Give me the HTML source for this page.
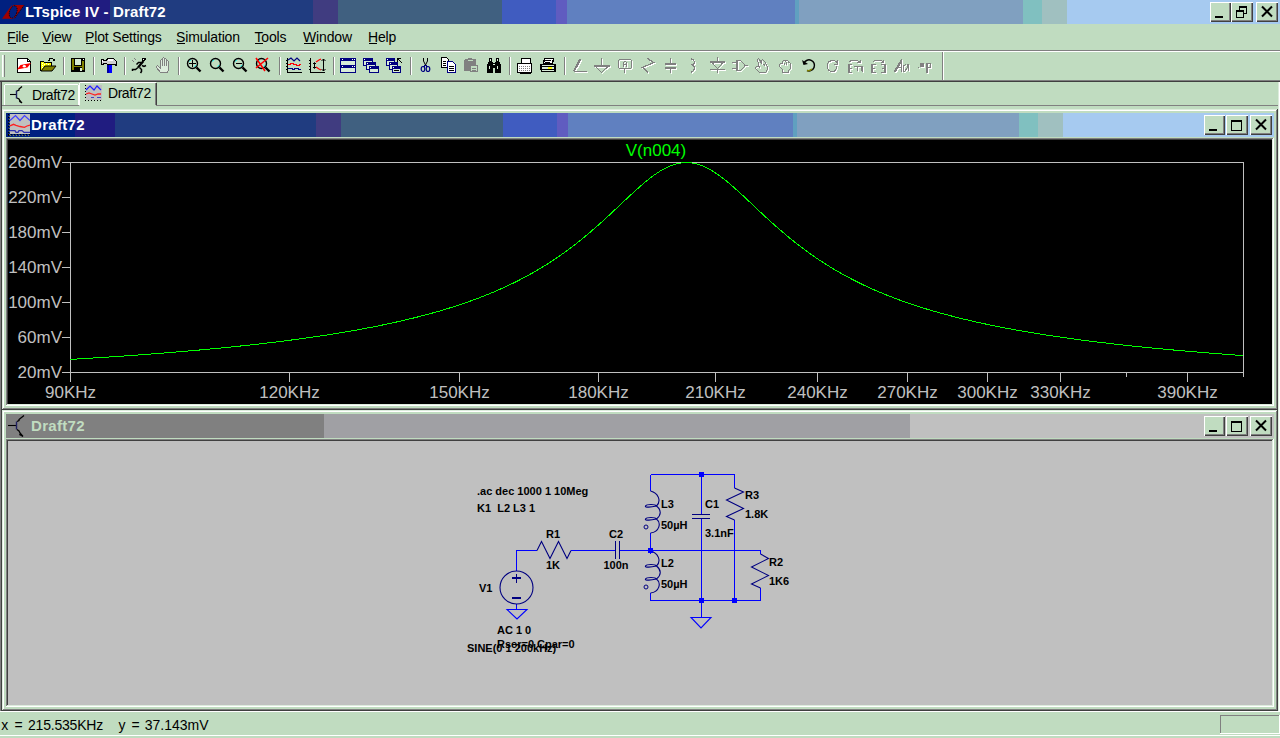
<!DOCTYPE html><html><head><meta charset="utf-8"><style>
html,body{margin:0;padding:0;}body{width:1280px;height:738px;overflow:hidden;position:relative;background:#c0dcc0;font-family:"Liberation Sans",sans-serif;}
.t{position:absolute;white-space:nowrap;line-height:1;}
</style></head><body>
<div style="position:absolute;left:0px;top:0px;width:1280px;height:24px;background:linear-gradient(to right,#002080 0.0px,#002080 70.0px,#201c80 70.0px,#201c80 110.0px,#203c80 110.0px,#203c80 313.0px,#403c80 313.0px,#403c80 338.0px,#406080 338.0px,#406080 502.0px,#405cc0 502.0px,#405cc0 556.0px,#605cc0 556.0px,#605cc0 567.0px,#6080c0 567.0px,#6080c0 795.0px,#60a0c0 795.0px,#60a0c0 799.0px,#80a0c0 799.0px,#80a0c0 1023.0px,#80c0c0 1023.0px,#80c0c0 1042.0px,#a0c0c0 1042.0px,#a0c0c0 1067.0px,#a6caf0 1067.0px,#a6caf0 1280.0px);"></div>
<svg style="position:absolute;left:0px;top:0px" width="28" height="24" viewBox="0 0 28 24"><polygon points="2,18.7 11.8,5 24.2,5 14.2,18.7" fill="#a00000"/><ellipse cx="13.2" cy="11.9" rx="3.6" ry="6.3" transform="rotate(18 13.2 11.9)" fill="#002080" stroke="#000" stroke-width="0.8" stroke-dasharray="1 1"/><path d="M12.6 4.5L11.8 6.5M14 17.5L13 19.5" stroke="#002080" stroke-width="1.2"/><path d="M24 5.5L14.5 18.5" stroke="#000" stroke-width="0.8" stroke-dasharray="1 1"/></svg>
<div class="t" style="left:25px;top:4px;font-size:15px;letter-spacing:0.15px;font-weight:bold;color:#fff;">LTspice IV - Draft72</div>
<div style="position:absolute;left:1210px;top:2px;width:21px;height:20px;background:#c0dcc0;box-shadow:inset 1px 1px 0 #fff, inset -1px -1px 0 #404040, inset -2px -2px 0 #808080;"><div style="position:absolute;left:5px;top:14px;width:8px;height:2px;background:#000"></div></div>
<div style="position:absolute;left:1231px;top:2px;width:22px;height:20px;background:#c0dcc0;box-shadow:inset 1px 1px 0 #fff, inset -1px -1px 0 #404040, inset -2px -2px 0 #808080;"><div style="position:absolute;left:8px;top:4px;width:6px;height:5px;border:1px solid #000;border-top-width:2px;"></div><div style="position:absolute;left:5px;top:8px;width:6px;height:5px;border:1px solid #000;border-top-width:2px;background:#c0dcc0"></div></div>
<div style="position:absolute;left:1256px;top:2px;width:22px;height:20px;background:#c0dcc0;box-shadow:inset 1px 1px 0 #fff, inset -1px -1px 0 #404040, inset -2px -2px 0 #808080;"><svg style="position:absolute;left:0;top:0" width="22" height="20"><path d="M6.0 4.5L16.0 14.5M16.0 4.5L6.0 14.5" stroke="#000" stroke-width="2"/></svg></div>
<div class="t" style="left:7px;top:30px;font-size:14px;letter-spacing:-0.15px;color:#000;">File</div>
<div style="position:absolute;left:7.5px;top:43px;width:8px;height:1px;background:#000;"></div>
<div class="t" style="left:42px;top:30px;font-size:14px;letter-spacing:-0.15px;color:#000;">View</div>
<div style="position:absolute;left:42.5px;top:43px;width:8px;height:1px;background:#000;"></div>
<div class="t" style="left:85px;top:30px;font-size:14px;letter-spacing:-0.15px;color:#000;">Plot Settings</div>
<div style="position:absolute;left:85.5px;top:43px;width:8px;height:1px;background:#000;"></div>
<div class="t" style="left:176px;top:30px;font-size:14px;letter-spacing:-0.15px;color:#000;">Simulation</div>
<div style="position:absolute;left:176.5px;top:43px;width:8px;height:1px;background:#000;"></div>
<div class="t" style="left:254.5px;top:30px;font-size:14px;letter-spacing:-0.15px;color:#000;">Tools</div>
<div style="position:absolute;left:255.0px;top:43px;width:8px;height:1px;background:#000;"></div>
<div class="t" style="left:303px;top:30px;font-size:14px;letter-spacing:-0.15px;color:#000;">Window</div>
<div style="position:absolute;left:303.5px;top:43px;width:11px;height:1px;background:#000;"></div>
<div class="t" style="left:368px;top:30px;font-size:14px;letter-spacing:-0.15px;color:#000;">Help</div>
<div style="position:absolute;left:368.5px;top:43px;width:8px;height:1px;background:#000;"></div>
<div style="position:absolute;left:0px;top:50px;width:1280px;height:1px;background:#808080;"></div>
<div style="position:absolute;left:0px;top:51px;width:1280px;height:1px;background:#fff;"></div>
<div style="position:absolute;left:2px;top:55px;width:1px;height:22px;background:#fff;"></div><div style="position:absolute;left:3px;top:55px;width:1px;height:22px;background:#dcecdc;"></div><div style="position:absolute;left:4px;top:55px;width:1px;height:22px;background:#808080;"></div><div style="position:absolute;left:63px;top:57px;width:1px;height:18px;background:#808080;"></div><div style="position:absolute;left:64px;top:57px;width:1px;height:18px;background:#fff;"></div><div style="position:absolute;left:93px;top:57px;width:1px;height:18px;background:#808080;"></div><div style="position:absolute;left:94px;top:57px;width:1px;height:18px;background:#fff;"></div><div style="position:absolute;left:124px;top:57px;width:1px;height:18px;background:#808080;"></div><div style="position:absolute;left:125px;top:57px;width:1px;height:18px;background:#fff;"></div><div style="position:absolute;left:178px;top:57px;width:1px;height:18px;background:#808080;"></div><div style="position:absolute;left:179px;top:57px;width:1px;height:18px;background:#fff;"></div><div style="position:absolute;left:279px;top:57px;width:1px;height:18px;background:#808080;"></div><div style="position:absolute;left:280px;top:57px;width:1px;height:18px;background:#fff;"></div><div style="position:absolute;left:333px;top:57px;width:1px;height:18px;background:#808080;"></div><div style="position:absolute;left:334px;top:57px;width:1px;height:18px;background:#fff;"></div><div style="position:absolute;left:410px;top:57px;width:1px;height:18px;background:#808080;"></div><div style="position:absolute;left:411px;top:57px;width:1px;height:18px;background:#fff;"></div><div style="position:absolute;left:509px;top:57px;width:1px;height:18px;background:#808080;"></div><div style="position:absolute;left:510px;top:57px;width:1px;height:18px;background:#fff;"></div><div style="position:absolute;left:564px;top:57px;width:1px;height:18px;background:#808080;"></div><div style="position:absolute;left:565px;top:57px;width:1px;height:18px;background:#fff;"></div><div style="position:absolute;left:942px;top:52px;width:1px;height:28px;background:#808080;"></div><div style="position:absolute;left:943px;top:52px;width:1px;height:28px;background:#fff;"></div><svg style="position:absolute;left:16px;top:57px" width="18" height="18" viewBox="0 0 18 18" shape-rendering="crispEdges"><path d="M1.5 1.5H11.5L14.5 4.5V15.5H1.5Z" fill="#fff" stroke="#000" stroke-width="1"/><path d="M11.5 1.5V4.5H14.5" stroke="#000" fill="none"/><polygon points="1,12.5 4.5,8 15,6 11.5,10.5" fill="#ff0000" shape-rendering="auto"/><ellipse cx="8.3" cy="9.2" rx="1.6" ry="1.2" fill="#fff" shape-rendering="auto"/></svg><svg style="position:absolute;left:40px;top:57px" width="18" height="18" viewBox="0 0 18 18" shape-rendering="crispEdges"><path d="M0.5 13.5V4.5H3.5L4.5 5.5H11.5V8.5" fill="#ffff00" stroke="#000"/><path d="M2 6H3M4 7H5M6 6H7M8 7H9M2 8H3M2 10H3M4 9H5" stroke="#fff"/><polygon points="1,14 5,9 16,9 12,14" fill="#808000" stroke="#000" shape-rendering="auto"/><path d="M8.5 4.5L10 1.5H12.5L14 3" stroke="#000" fill="none"/><polygon points="12,4 15,4 15,1" fill="#000"/></svg><svg style="position:absolute;left:70px;top:57px" width="18" height="18" viewBox="0 0 18 18" shape-rendering="crispEdges"><rect x="1" y="1" width="14" height="14" fill="#000"/><rect x="2" y="2" width="2" height="11" fill="#808000"/><rect x="12" y="4" width="2" height="9" fill="#808000"/><rect x="4" y="9" width="8" height="1" fill="#808000"/><rect x="5" y="2" width="6" height="6" fill="#d8ecd8"/><rect x="10" y="11" width="2" height="3" fill="#d8ecd8"/><rect x="13" y="2" width="1" height="1" fill="#fff"/></svg><svg style="position:absolute;left:100px;top:57px" width="18" height="18" viewBox="0 0 18 18" shape-rendering="crispEdges"><path d="M1.5 2.5H3.5V3.5H6.5L7.5 1.5H13.5L16.5 4.5V8.5L14.5 7.5H7.5L6.5 6.5H3.5V7.5H1.5Z" fill="#d0d0d0" stroke="#000"/><rect x="8" y="2" width="5" height="2" fill="#fff"/><rect x="2" y="3" width="1" height="2" fill="#fff"/><rect x="7" y="8" width="5" height="8" fill="#0000ff"/><rect x="7" y="8" width="2" height="8" fill="#0000a0"/></svg><svg style="position:absolute;left:131px;top:57px" width="18" height="18" viewBox="0 0 18 18" shape-rendering="crispEdges"><path d="M11 1H15V2L13 4H11Z" fill="#000"/><rect x="12" y="2" width="1" height="1" fill="#fff"/><path d="M12.5 4L7 10.5" stroke="#000" stroke-width="2.2" shape-rendering="auto"/><path d="M7 10.5L4.5 12.5H1.5V14M8.5 10.5L10.5 12.5V14.5L9.5 16M10 5.5H7.5L5.5 7.5M11 8.5L13 9.5L15 8.5" stroke="#000" stroke-width="1.5" fill="none" shape-rendering="auto"/><path d="M1 3.5L3 4.5M3 1.5L5 2.5" stroke="#808080" fill="none"/></svg><svg style="position:absolute;left:155px;top:57px" width="18" height="18" viewBox="0 0 18 18" shape-rendering="crispEdges"><path d="M5.5 15.5L1.5 10.5V9.5L2.5 8.5L5.5 11.5V3.5L6.5 2.5L7.5 3.5V1.5L8.5 0.5L9.5 1.5V2.5L10.5 1.5L11.5 2.5V4.5L12.5 3.5L13.5 4.5V12.5L12.5 15.5Z" fill="#dcecdc" stroke="#808080"/><path d="M7.5 3V9M9.5 2V9M11.5 3V9" stroke="#808080"/></svg><svg style="position:absolute;left:186px;top:57px" width="18" height="18" viewBox="0 0 18 18" shape-rendering="crispEdges"><circle cx="6.5" cy="6.5" r="5" fill="#c0dcc0" stroke="#000" stroke-width="1.4" shape-rendering="auto"/><path d="M3.5 4.5A3 3 0 0 1 5 3M8.5 9.5A3 3 0 0 0 10 8" stroke="#00ffff" fill="none" shape-rendering="auto"/><path d="M10.5 10.5L14.5 14.5" stroke="#000" stroke-width="2.4" shape-rendering="auto"/><path d="M3 6.5H10M6.5 3V10" stroke="#000" stroke-width="1.2"/></svg><svg style="position:absolute;left:209px;top:57px" width="18" height="18" viewBox="0 0 18 18" shape-rendering="crispEdges"><circle cx="6.5" cy="6.5" r="5" fill="#c0dcc0" stroke="#000" stroke-width="1.4" shape-rendering="auto"/><path d="M3.5 4.5A3 3 0 0 1 5 3M8.5 9.5A3 3 0 0 0 10 8" stroke="#00ffff" fill="none" shape-rendering="auto"/><path d="M10.5 10.5L14.5 14.5" stroke="#000" stroke-width="2.4" shape-rendering="auto"/></svg><svg style="position:absolute;left:232px;top:57px" width="18" height="18" viewBox="0 0 18 18" shape-rendering="crispEdges"><circle cx="6.5" cy="6.5" r="5" fill="#c0dcc0" stroke="#000" stroke-width="1.4" shape-rendering="auto"/><path d="M3.5 4.5A3 3 0 0 1 5 3M8.5 9.5A3 3 0 0 0 10 8" stroke="#00ffff" fill="none" shape-rendering="auto"/><path d="M10.5 10.5L14.5 14.5" stroke="#000" stroke-width="2.4" shape-rendering="auto"/><path d="M3.5 6.5H9.5" stroke="#000" stroke-width="1.2"/></svg><svg style="position:absolute;left:255px;top:57px" width="18" height="18" viewBox="0 0 18 18" shape-rendering="crispEdges"><circle cx="6.5" cy="6.5" r="5" fill="#c0dcc0" stroke="#000" stroke-width="1.4" shape-rendering="auto"/><path d="M3.5 4.5A3 3 0 0 1 5 3M8.5 9.5A3 3 0 0 0 10 8" stroke="#00ffff" fill="none" shape-rendering="auto"/><path d="M10.5 10.5L14.5 14.5" stroke="#000" stroke-width="2.4" shape-rendering="auto"/><path d="M1 1L10 14M13 1L1 11" stroke="#ff0000" stroke-width="1.6" shape-rendering="auto"/></svg><svg style="position:absolute;left:286px;top:57px" width="18" height="18" viewBox="0 0 18 18" shape-rendering="crispEdges"><path d="M1.5 1V15.5H16" stroke="#000" fill="none"/><path d="M0 3.5H1M0 6.5H1M0 9.5H1M0 12.5H1M4.5 15V16M7.5 15V16M10.5 15V16M13.5 15V16" stroke="#000"/><path d="M2 3L5 1L8 4L11 1L14 4" stroke="#000080" fill="none" stroke-width="1.2" shape-rendering="auto"/><path d="M2 7.5H4L5 6.5H7L8 7.5H10L11 8.5H13L14 7.5H15" stroke="#ff0000" stroke-width="1.2" fill="none"/><path d="M2 11.5H6L7 12.5H8L9 11.5H12L13 12.5H15" stroke="#000080" stroke-width="1.4" fill="none"/></svg><svg style="position:absolute;left:309px;top:57px" width="18" height="18" viewBox="0 0 18 18" shape-rendering="crispEdges"><path d="M1.5 1V15.5H16" stroke="#000" fill="none"/><path d="M0 3.5H1M0 6.5H1M0 9.5H1M0 12.5H1M4.5 15V16M7.5 15V16M10.5 15V16M13.5 15V16" stroke="#000"/><path d="M7 5L10 3L12 2M7 10L10 12L12 13" stroke="#ff0000" stroke-width="1.3" fill="none" shape-rendering="auto"/><path d="M14.5 2V14M12.5 4L14.5 2L16.5 4M12.5 12L14.5 14L16.5 12M5.5 6V11M4 7L5.5 5.5L7 7M4 10L5.5 11.5L7 10" stroke="#000" fill="none" shape-rendering="auto"/></svg><svg style="position:absolute;left:340px;top:57px" width="18" height="18" viewBox="0 0 18 18" shape-rendering="crispEdges"><rect x="0" y="1" width="16" height="15" fill="#000080"/><rect x="1" y="4" width="14" height="4" fill="#d8ecd8"/><rect x="1" y="11" width="14" height="4" fill="#d8ecd8"/><path d="M2 2.5H3M12 2.5H13M14 2.5H15M2 9.5H3M12 9.5H13M14 9.5H15" stroke="#fff"/></svg><svg style="position:absolute;left:363px;top:57px" width="18" height="18" viewBox="0 0 18 18" shape-rendering="crispEdges"><rect x="0" y="1" width="10" height="8" fill="#000080"/><rect x="1" y="4" width="8" height="4" fill="#d8ecd8"/><rect x="1" y="2" width="1" height="1" fill="#fff"/><rect x="3" y="5" width="10" height="8" fill="#000080"/><rect x="4" y="8" width="8" height="4" fill="#d8ecd8"/><rect x="4" y="6" width="1" height="1" fill="#fff"/><rect x="6" y="9" width="10" height="7" fill="#000080"/><rect x="7" y="12" width="8" height="3" fill="#d8ecd8"/><rect x="7" y="10" width="1" height="1" fill="#fff"/></svg><svg style="position:absolute;left:386px;top:57px" width="18" height="18" viewBox="0 0 18 18" shape-rendering="crispEdges"><rect x="0" y="1" width="9" height="8" fill="#000080"/><rect x="1" y="4" width="7" height="4" fill="#d8ecd8"/><rect x="1" y="2" width="1" height="1" fill="#fff"/><rect x="3" y="5" width="9" height="8" fill="#000080"/><rect x="4" y="8" width="7" height="4" fill="#d8ecd8"/><rect x="4" y="6" width="1" height="1" fill="#fff"/><rect x="6" y="9" width="9" height="7" fill="#000080"/><rect x="7" y="12" width="7" height="3" fill="#d8ecd8"/><rect x="7" y="10" width="1" height="1" fill="#fff"/><path d="M11.5 1V5M11 1.5H15M12 2L16 6" stroke="#000" stroke-width="1.2" fill="none"/><rect x="8" y="13" width="5" height="1" fill="#000"/></svg><svg style="position:absolute;left:420px;top:57px" width="18" height="18" viewBox="0 0 18 18" shape-rendering="crispEdges"><path d="M3.5 1V4L5.5 8M7.5 1V4L5.5 8" stroke="#000" fill="none" shape-rendering="auto"/><ellipse cx="3" cy="12" rx="1.8" ry="2.5" stroke="#000080" fill="none" stroke-width="1.2" shape-rendering="auto"/><ellipse cx="8" cy="12" rx="1.8" ry="2.5" stroke="#000080" fill="none" stroke-width="1.2" shape-rendering="auto"/><path d="M5.5 8L3.5 10M5.5 8L7.5 10" stroke="#000080" fill="none"/></svg><svg style="position:absolute;left:441px;top:57px" width="18" height="18" viewBox="0 0 18 18" shape-rendering="crispEdges"><path d="M0.5 0.5H5.5L7.5 2.5V10.5H0.5Z" fill="#fff" stroke="#000"/><path d="M2 4H5M2 6H5M2 8H5" stroke="#000"/><path d="M6.5 4.5H11.5L14.5 7.5V15.5H6.5Z" fill="#fff" stroke="#000080"/><path d="M8 9H13M8 11H13M8 13H13" stroke="#000"/></svg><svg style="position:absolute;left:464px;top:57px" width="18" height="18" viewBox="0 0 18 18" shape-rendering="crispEdges"><rect x="0" y="2" width="12" height="12" rx="2" fill="#808080"/><rect x="4" y="1" width="4" height="2" fill="#808080"/><rect x="4" y="3" width="5" height="1" fill="#c0dcc0"/><rect x="6" y="8" width="8" height="7" fill="#fff"/><rect x="6.5" y="8.5" width="7" height="6" fill="#c0dcc0" stroke="#808080"/><path d="M8 11H12M8 13H12" stroke="#808080"/></svg><svg style="position:absolute;left:486px;top:57px" width="18" height="18" viewBox="0 0 18 18" shape-rendering="crispEdges"><rect x="3" y="1" width="3" height="4" fill="#000"/><rect x="10" y="1" width="3" height="4" fill="#000"/><polygon points="2,5 7,5 7,16 1,16 1,9" fill="#000"/><polygon points="9,5 14,5 15,9 15,16 9,16" fill="#000"/><rect x="6" y="6" width="4" height="5" fill="#000"/><rect x="4" y="2" width="1" height="2" fill="#d8ecd8"/><rect x="11" y="2" width="1" height="2" fill="#d8ecd8"/><rect x="3" y="9" width="1" height="3" fill="#d8ecd8"/><rect x="11" y="9" width="1" height="3" fill="#d8ecd8"/><rect x="7" y="7" width="2" height="1" fill="#d8ecd8"/></svg><svg style="position:absolute;left:517px;top:57px" width="18" height="18" viewBox="0 0 18 18" shape-rendering="crispEdges"><rect x="4" y="1" width="9" height="5" fill="#fff" stroke="#000"/><path d="M0.5 6.5H14.5V15.5H0.5Z" fill="#fff" stroke="#000" stroke-width="1.4"/><path d="M2 9H13M2 11H13M2 13H13" stroke="#808080" stroke-dasharray="1 1"/><rect x="3" y="15" width="11" height="2" fill="#000"/></svg><svg style="position:absolute;left:540px;top:57px" width="18" height="18" viewBox="0 0 18 18" shape-rendering="crispEdges"><path d="M4.5 1.5H13.5L12.5 6.5H3.5Z" fill="#fff" stroke="#000" stroke-width="1.3"/><path d="M5 3H11M5 5H10" stroke="#000"/><path d="M1 7.5H15V14.5H2L1 13Z" fill="#d8ecd8" stroke="#000" stroke-width="1.3"/><rect x="2" y="9" width="12" height="1" fill="#000"/><rect x="2" y="12" width="12" height="1" fill="#000"/><rect x="8" y="10" width="4" height="2" fill="#ffff00"/></svg><svg style="position:absolute;left:572px;top:57px" width="18" height="18" viewBox="0 0 18 18" shape-rendering="crispEdges"><g transform="translate(1,1)" stroke="#fff" fill="none"><path d="M1.5 14.5H15"/><polygon points="1,14 7,1.5 10,1.5 3,14" fill="#fff" stroke="none"/></g><g stroke="#808080" fill="none"><path d="M1.5 14.5H15"/><polygon points="1,14 7,1.5 10,1.5 3,14" fill="#808080" stroke="none"/></g></svg><svg style="position:absolute;left:594px;top:57px" width="18" height="18" viewBox="0 0 18 18" shape-rendering="crispEdges"><g transform="translate(1,1)" stroke="#fff" fill="none"><path d="M7.5 1V8M0 8H16M1 9L7.5 15.5L14.5 9M1 9.5H15" /><path d="M0 8.5H16" stroke-width="2"/></g><g stroke="#808080" fill="none"><path d="M7.5 1V8M0 8H16M1 9L7.5 15.5L14.5 9M1 9.5H15" /><path d="M0 8.5H16" stroke-width="2"/></g></svg><svg style="position:absolute;left:617px;top:57px" width="18" height="18" viewBox="0 0 18 18" shape-rendering="crispEdges"><g transform="translate(1,1)" stroke="#fff" fill="none"><path d="M2.5 2.5H13.5L14.5 3.5V10.5L13.5 11.5H2.5L1.5 10.5V3.5Z M7.5 11.5V16"/><path d="M1.5 3V11M14.5 3V11" stroke-width="1.6"/><path d="M6.5 10V5.5L7.5 4.5H8.5L9.5 5.5V10M6.5 7.5H9.5"/></g><g stroke="#808080" fill="none"><path d="M2.5 2.5H13.5L14.5 3.5V10.5L13.5 11.5H2.5L1.5 10.5V3.5Z M7.5 11.5V16"/><path d="M1.5 3V11M14.5 3V11" stroke-width="1.6"/><path d="M6.5 10V5.5L7.5 4.5H8.5L9.5 5.5V10M6.5 7.5H9.5"/></g></svg><svg style="position:absolute;left:640px;top:57px" width="18" height="18" viewBox="0 0 18 18" shape-rendering="crispEdges"><g transform="translate(1,1)" stroke="#fff" fill="none"><path d="M7.5 1.5L13.5 5.5L2.5 10.5L8.5 15.5" stroke-width="1.3"/></g><g stroke="#808080" fill="none"><path d="M7.5 1.5L13.5 5.5L2.5 10.5L8.5 15.5" stroke-width="1.3"/></g></svg><svg style="position:absolute;left:663px;top:57px" width="18" height="18" viewBox="0 0 18 18" shape-rendering="crispEdges"><g transform="translate(1,1)" stroke="#fff" fill="none"><path d="M7.5 1V6M7.5 12V16"/><rect x="2" y="6" width="11" height="2" fill="#fff" stroke="none"/><rect x="2" y="10" width="11" height="2" fill="#fff" stroke="none"/></g><g stroke="#808080" fill="none"><path d="M7.5 1V6M7.5 12V16"/><rect x="2" y="6" width="11" height="2" fill="#808080" stroke="none"/><rect x="2" y="10" width="11" height="2" fill="#808080" stroke="none"/></g></svg><svg style="position:absolute;left:686px;top:57px" width="18" height="18" viewBox="0 0 18 18" shape-rendering="crispEdges"><g transform="translate(1,1)" stroke="#fff" fill="none"><path d="M5 1.5L7.5 3L8.5 5V6L7 7.5H6L7.5 8.5L8.5 10V12L7 14L5 15.5" stroke-width="1.3"/></g><g stroke="#808080" fill="none"><path d="M5 1.5L7.5 3L8.5 5V6L7 7.5H6L7.5 8.5L8.5 10V12L7 14L5 15.5" stroke-width="1.3"/></g></svg><svg style="position:absolute;left:709px;top:57px" width="18" height="18" viewBox="0 0 18 18" shape-rendering="crispEdges"><g transform="translate(1,1)" stroke="#fff" fill="none"><path d="M8.5 0V4M8.5 12V16M1 12.5H16M2 4.5H15L8.5 11.5Z"/><path d="M1 4.5H16" stroke-width="2"/></g><g stroke="#808080" fill="none"><path d="M8.5 0V4M8.5 12V16M1 12.5H16M2 4.5H15L8.5 11.5Z"/><path d="M1 4.5H16" stroke-width="2"/></g></svg><svg style="position:absolute;left:732px;top:57px" width="18" height="18" viewBox="0 0 18 18" shape-rendering="crispEdges"><g transform="translate(1,1)" stroke="#fff" fill="none"><path d="M0 5.5H4M0 11.5H4M12.5 8.5H16M5 3.5H8.5L12.5 7.5V9.5L8.5 13.5H5"/><path d="M5 3V14" stroke-width="2"/></g><g stroke="#808080" fill="none"><path d="M0 5.5H4M0 11.5H4M12.5 8.5H16M5 3.5H8.5L12.5 7.5V9.5L8.5 13.5H5"/><path d="M5 3V14" stroke-width="2"/></g></svg><svg style="position:absolute;left:755px;top:57px" width="18" height="18" viewBox="0 0 18 18" shape-rendering="crispEdges"><g transform="translate(1,1)" stroke="#fff" fill="none"><path d="M4.5 15.5L0.5 11.5V10.5L1.5 9.5H3.5L4.5 10.5L2.5 3.5V2.5L3.5 1.5L4.5 2.5L6.5 6.5V3.5L7.5 2.5L9.5 4.5L11.5 7.5V8.5L12.5 9.5V12.5L10.5 15.5Z M8.5 7L10 9M10 5.5L11.5 8"/></g><g stroke="#808080" fill="none"><path d="M4.5 15.5L0.5 11.5V10.5L1.5 9.5H3.5L4.5 10.5L2.5 3.5V2.5L3.5 1.5L4.5 2.5L6.5 6.5V3.5L7.5 2.5L9.5 4.5L11.5 7.5V8.5L12.5 9.5V12.5L10.5 15.5Z M8.5 7L10 9M10 5.5L11.5 8"/></g></svg><svg style="position:absolute;left:778px;top:57px" width="18" height="18" viewBox="0 0 18 18" shape-rendering="crispEdges"><g transform="translate(1,1)" stroke="#fff" fill="none"><path d="M4.5 15.5V12.5L1.5 9.5V7.5L2.5 6.5H4.5V4.5L5.5 3.5H6.5L7.5 4.5V3.5H9.5L10.5 4.5V5.5H11.5L12.5 6.5V11.5L10.5 13.5V15.5Z M6.5 6V8M8.5 5V8"/></g><g stroke="#808080" fill="none"><path d="M4.5 15.5V12.5L1.5 9.5V7.5L2.5 6.5H4.5V4.5L5.5 3.5H6.5L7.5 4.5V3.5H9.5L10.5 4.5V5.5H11.5L12.5 6.5V11.5L10.5 13.5V15.5Z M6.5 6V8M8.5 5V8"/></g></svg><svg style="position:absolute;left:824px;top:57px" width="18" height="18" viewBox="0 0 18 18" shape-rendering="crispEdges"><g transform="translate(1,1)" stroke="#fff" fill="none"><path d="M13 9.5L12 12.5L10 14.5H7L4.5 13L3.5 11V7L5 4.5L8 3.5H10L12 4.5L13.5 6.5M13.5 3V7H10"/></g><g stroke="#808080" fill="none"><path d="M13 9.5L12 12.5L10 14.5H7L4.5 13L3.5 11V7L5 4.5L8 3.5H10L12 4.5L13.5 6.5M13.5 3V7H10"/></g></svg><svg style="position:absolute;left:847px;top:57px" width="18" height="18" viewBox="0 0 18 18" shape-rendering="crispEdges"><g transform="translate(1,1)" stroke="#fff" fill="none"><path d="M1 16V7H5M1 11H5M1 15.5H5M7 9.5H15V15M10.5 10V14M14.5 10V14M2.5 5L4.5 3H10L12.5 5M10 5.5H13V3"/><path d="M1.5 7V16" stroke-width="2"/></g><g stroke="#808080" fill="none"><path d="M1 16V7H5M1 11H5M1 15.5H5M7 9.5H15V15M10.5 10V14M14.5 10V14M2.5 5L4.5 3H10L12.5 5M10 5.5H13V3"/><path d="M1.5 7V16" stroke-width="2"/></g></svg><svg style="position:absolute;left:870px;top:57px" width="18" height="18" viewBox="0 0 18 18" shape-rendering="crispEdges"><g transform="translate(1,1)" stroke="#fff" fill="none"><path d="M1.5 16V7H6M1.5 11H5M1.5 15.5H6M15.5 7V16M11 7.5H15.5M12 11H15.5M11 15.5H15.5M3 5L5 3H10.5L13 5M10.5 5.5H13.5V3"/><path d="M2 7V16M15 7V16" stroke-width="2"/></g><g stroke="#808080" fill="none"><path d="M1.5 16V7H6M1.5 11H5M1.5 15.5H6M15.5 7V16M11 7.5H15.5M12 11H15.5M11 15.5H15.5M3 5L5 3H10.5L13 5M10.5 5.5H13.5V3"/><path d="M2 7V16M15 7V16" stroke-width="2"/></g></svg><svg style="position:absolute;left:893px;top:57px" width="18" height="18" viewBox="0 0 18 18" shape-rendering="crispEdges"><g transform="translate(1,1)" stroke="#fff" fill="none"><path d="M1 15L8.5 2.5V14.5M4.5 10H8.5M13 7.5L11 8.5L10 11L10.5 14H12L14 11L15 7.5V14"/><path d="M2 14.5L8 4" stroke-width="2"/></g><g stroke="#808080" fill="none"><path d="M1 15L8.5 2.5V14.5M4.5 10H8.5M13 7.5L11 8.5L10 11L10.5 14H12L14 11L15 7.5V14"/><path d="M2 14.5L8 4" stroke-width="2"/></g></svg><svg style="position:absolute;left:916px;top:57px" width="18" height="18" viewBox="0 0 18 18" shape-rendering="crispEdges"><g transform="translate(1,1)" stroke="#fff" fill="none"><path d="M1.5 10.5H2.5M4.5 6.5H7.5V9.5H4.5ZM10.5 6.5H14.5V10.5H10.5M10.5 6.5V16"/><rect x="5" y="7" width="2" height="2" fill="#fff" stroke="none"/><path d="M11 6V16" stroke-width="2"/></g><g stroke="#808080" fill="none"><path d="M1.5 10.5H2.5M4.5 6.5H7.5V9.5H4.5ZM10.5 6.5H14.5V10.5H10.5M10.5 6.5V16"/><rect x="5" y="7" width="2" height="2" fill="#808080" stroke="none"/><path d="M11 6V16" stroke-width="2"/></g></svg><svg style="position:absolute;left:801px;top:57px" width="18" height="18" viewBox="0 0 18 18" shape-rendering="crispEdges"><path d="M3 6A5.5 5.5 0 1 1 6 13.5" stroke="#000" stroke-width="1.5" fill="none" shape-rendering="auto"/><path d="M11 12A5.5 5.5 0 0 1 6 13.5" stroke="#808000" stroke-width="1.5" fill="none" shape-rendering="auto"/><path d="M1 3L2.5 8L7 7Z" fill="#000" shape-rendering="auto"/></svg>
<div style="position:absolute;left:0px;top:80px;width:1280px;height:1px;background:#808080;"></div>
<div style="position:absolute;left:0px;top:81px;width:1280px;height:1px;background:#404040;"></div>
<div style="position:absolute;left:2px;top:105px;width:1276px;height:1px;background:#808080;"></div><div style="position:absolute;left:4px;top:85px;width:1px;height:20px;background:#fff;"></div><div style="position:absolute;left:5px;top:84px;width:73px;height:1px;background:#fff;"></div><div style="position:absolute;left:78px;top:85px;width:1px;height:20px;background:#fff;"></div><svg style="position:absolute;left:8px;top:84px" width="22" height="22" viewBox="0 0 22 22"><path d="M2 10.5H8" stroke="#000" stroke-width="1.1" fill="none"/><path d="M8.5 6.5V14.5" stroke="#202060" stroke-width="1.4" fill="none"/><path d="M9 7L11 6V5L14 2.5M9 14L11 15L12 17L14 19" stroke="#000" stroke-width="1.3" fill="none"/><path d="M12 16L14 19L11 18Z" fill="#000"/></svg><div class="t" style="left:32px;top:88px;font-size:14px;letter-spacing:-0.45px;color:#000;">Draft72</div><div style="position:absolute;left:79px;top:83px;width:1px;height:23px;background:#fff;"></div><div style="position:absolute;left:80px;top:82px;width:76px;height:1px;background:#fff;"></div><div style="position:absolute;left:155px;top:83px;width:1px;height:22px;background:#808080;"></div><div style="position:absolute;left:156px;top:83px;width:1px;height:22px;background:#404040;"></div><div style="position:absolute;left:79px;top:105px;width:77px;height:1px;background:#c0dcc0;"></div><svg style="position:absolute;left:85px;top:85px" width="17" height="17" viewBox="0 0 17 17"><rect x="1" y="0" width="16" height="15" fill="#c0c0c0"/><path d="M0.5 0V16M0 15.5H17" stroke="#000" stroke-dasharray="1 2" fill="none"/><path d="M1 5L5 1L9 5L12 1L16 5" stroke="#2020ff" stroke-width="1.2" fill="none"/><path d="M1 9L4 8L7 9L10 10L13 9L16 9" stroke="#ff2020" stroke-width="1.3" fill="none"/><path d="M6 12.5H9M12 12.5H16" stroke="#4040c0" stroke-width="1.2" fill="none"/></svg><div class="t" style="left:108px;top:86px;font-size:14px;letter-spacing:-0.45px;color:#000;">Draft72</div>
<div style="position:absolute;left:0px;top:82px;width:1px;height:630px;background:#808080;"></div>
<div style="position:absolute;left:1px;top:82px;width:1px;height:629px;background:#404040;"></div>
<div style="position:absolute;left:1278px;top:82px;width:1px;height:629px;background:#dcecdc;"></div>
<div style="position:absolute;left:1279px;top:82px;width:1px;height:630px;background:#fff;"></div>
<div style="position:absolute;left:0px;top:711px;width:1280px;height:1px;background:#fff;"></div>
<div style="position:absolute;left:2px;top:109px;width:1276px;height:301px;background:#c0dcc0;"></div><div style="position:absolute;left:2px;top:109px;width:1275px;height:1px;background:#dcecdc;"></div><div style="position:absolute;left:2px;top:109px;width:1px;height:300px;background:#dcecdc;"></div><div style="position:absolute;left:3px;top:110px;width:1273px;height:1px;background:#fff;"></div><div style="position:absolute;left:3px;top:110px;width:1px;height:298px;background:#fff;"></div><div style="position:absolute;left:3px;top:408px;width:1274px;height:1px;background:#808080;"></div><div style="position:absolute;left:1276px;top:110px;width:1px;height:299px;background:#808080;"></div><div style="position:absolute;left:2px;top:409px;width:1276px;height:1px;background:#404040;"></div><div style="position:absolute;left:1277px;top:109px;width:1px;height:301px;background:#404040;"></div><div style="position:absolute;left:6px;top:113px;width:1268px;height:24px;background:linear-gradient(to right,#002080 0.0px,#002080 69.3px,#201c80 69.3px,#201c80 109.0px,#203c80 109.0px,#203c80 310.1px,#403c80 310.1px,#403c80 334.8px,#406080 334.8px,#406080 497.3px,#405cc0 497.3px,#405cc0 550.8px,#605cc0 550.8px,#605cc0 561.7px,#6080c0 561.7px,#6080c0 787.5px,#60a0c0 787.5px,#60a0c0 791.5px,#80a0c0 791.5px,#80a0c0 1013.4px,#80c0c0 1013.4px,#80c0c0 1032.2px,#a0c0c0 1032.2px,#a0c0c0 1057.0px,#a6caf0 1057.0px,#a6caf0 1268.0px);"></div><svg style="position:absolute;left:8px;top:114px" width="22" height="22" viewBox="0 0 22 22"><rect x="2" y="0" width="20" height="20" fill="#c0c0c0"/><path d="M0.5 0V22M0 20.5H22" stroke="#000" stroke-width="1" stroke-dasharray="1 2" fill="none"/><path d="M1.5 0V22M0 21.5H22" stroke="#808040" stroke-width="1" stroke-dasharray="1 2" stroke-dashoffset="1" fill="none"/><path d="M2 6.5L7.5 1.5L12 6.5L16.5 1.5L22 6.5" stroke="#4040ff" stroke-width="1.2" fill="none"/><path d="M2 11.8L5.5 10.3L8 11.3L12 12.5L16.5 13.3L19 12L22 11" stroke="#ff2020" stroke-width="1.3" fill="none"/><path d="M2 16.6H7L8 18.4H10L11 16.6H14L16 18.4H22" stroke="#3030b0" stroke-width="1.3" fill="none"/></svg><div class="t" style="left:31px;top:117px;font-size:15px;font-weight:bold;letter-spacing:0.3px;color:#fff;">Draft72</div><div style="position:absolute;left:1204px;top:115px;width:21px;height:20px;background:#c0dcc0;box-shadow:inset 1px 1px 0 #fff, inset -1px -1px 0 #404040, inset -2px -2px 0 #808080;"><div style="position:absolute;left:5px;top:14px;width:8px;height:2px;background:#000"></div></div><div style="position:absolute;left:1226px;top:115px;width:22px;height:20px;background:#c0dcc0;box-shadow:inset 1px 1px 0 #fff, inset -1px -1px 0 #404040, inset -2px -2px 0 #808080;"><div style="position:absolute;left:5px;top:5px;width:9px;height:8px;border:1px solid #000;border-top-width:2px;"></div></div><div style="position:absolute;left:1250px;top:115px;width:22px;height:20px;background:#c0dcc0;box-shadow:inset 1px 1px 0 #fff, inset -1px -1px 0 #404040, inset -2px -2px 0 #808080;"><svg style="position:absolute;left:0;top:0" width="22" height="20"><path d="M6.0 4.5L16.0 14.5M16.0 4.5L6.0 14.5" stroke="#000" stroke-width="2"/></svg></div><div style="position:absolute;left:6px;top:138px;width:1268px;height:268px;background:#000;"></div><div style="position:absolute;left:6px;top:138px;width:1267px;height:1px;background:#808080;"></div><div style="position:absolute;left:6px;top:138px;width:1px;height:267px;background:#808080;"></div><div style="position:absolute;left:7px;top:139px;width:1265px;height:1px;background:#404040;"></div><div style="position:absolute;left:7px;top:139px;width:1px;height:265px;background:#404040;"></div><div style="position:absolute;left:7px;top:404px;width:1266px;height:1px;background:#dcecdc;"></div><div style="position:absolute;left:1272px;top:139px;width:1px;height:266px;background:#dcecdc;"></div><div style="position:absolute;left:6px;top:405px;width:1268px;height:1px;background:#fff;"></div><div style="position:absolute;left:1273px;top:138px;width:1px;height:268px;background:#fff;"></div><svg style="position:absolute;left:0;top:0" width="1280" height="738" shape-rendering="crispEdges"><path d="M62 162.5H1243.5V372.5M70.5 162V380M62 372.5H1244" stroke="#c0c0c0" stroke-width="1" fill="none"/><path d="M62 162.5H70" stroke="#c0c0c0"/><text x="62" y="168" text-anchor="end" font-family="Liberation Sans" font-size="17" fill="#c0c0c0">260mV</text><path d="M62 197.5H70" stroke="#c0c0c0"/><text x="62" y="203" text-anchor="end" font-family="Liberation Sans" font-size="17" fill="#c0c0c0">220mV</text><path d="M62 232.5H70" stroke="#c0c0c0"/><text x="62" y="238" text-anchor="end" font-family="Liberation Sans" font-size="17" fill="#c0c0c0">180mV</text><path d="M62 267.5H70" stroke="#c0c0c0"/><text x="62" y="273" text-anchor="end" font-family="Liberation Sans" font-size="17" fill="#c0c0c0">140mV</text><path d="M62 302.5H70" stroke="#c0c0c0"/><text x="62" y="308" text-anchor="end" font-family="Liberation Sans" font-size="17" fill="#c0c0c0">100mV</text><path d="M62 337.5H70" stroke="#c0c0c0"/><text x="62" y="343" text-anchor="end" font-family="Liberation Sans" font-size="17" fill="#c0c0c0">60mV</text><path d="M62 372.5H70" stroke="#c0c0c0"/><text x="62" y="378" text-anchor="end" font-family="Liberation Sans" font-size="17" fill="#c0c0c0">20mV</text><path d="M70.5 372V382" stroke="#c0c0c0"/><text x="70.5" y="398" text-anchor="middle" font-family="Liberation Sans" font-size="17" fill="#c0c0c0">90KHz</text><path d="M289.5 372V382" stroke="#c0c0c0"/><text x="289.5" y="398" text-anchor="middle" font-family="Liberation Sans" font-size="17" fill="#c0c0c0">120KHz</text><path d="M459.5 372V382" stroke="#c0c0c0"/><text x="459.5" y="398" text-anchor="middle" font-family="Liberation Sans" font-size="17" fill="#c0c0c0">150KHz</text><path d="M598.5 372V382" stroke="#c0c0c0"/><text x="598.5" y="398" text-anchor="middle" font-family="Liberation Sans" font-size="17" fill="#c0c0c0">180KHz</text><path d="M715.5 372V382" stroke="#c0c0c0"/><text x="715.5" y="398" text-anchor="middle" font-family="Liberation Sans" font-size="17" fill="#c0c0c0">210KHz</text><path d="M817.5 372V382" stroke="#c0c0c0"/><text x="817.5" y="398" text-anchor="middle" font-family="Liberation Sans" font-size="17" fill="#c0c0c0">240KHz</text><path d="M907.5 372V382" stroke="#c0c0c0"/><text x="907.5" y="398" text-anchor="middle" font-family="Liberation Sans" font-size="17" fill="#c0c0c0">270KHz</text><path d="M987.5 372V382" stroke="#c0c0c0"/><text x="987.5" y="398" text-anchor="middle" font-family="Liberation Sans" font-size="17" fill="#c0c0c0">300KHz</text><path d="M1060.5 372V382" stroke="#c0c0c0"/><text x="1060.5" y="398" text-anchor="middle" font-family="Liberation Sans" font-size="17" fill="#c0c0c0">330KHz</text><path d="M1126.5 372V377" stroke="#c0c0c0"/><path d="M1187.5 372V382" stroke="#c0c0c0"/><text x="1187.5" y="398" text-anchor="middle" font-family="Liberation Sans" font-size="17" fill="#c0c0c0">390KHz</text><path d="M1243.5 372V377" stroke="#c0c0c0"/></svg><svg style="position:absolute;left:0;top:0" width="1280" height="738"><path d="M70.5,359.41 L71.0,359.38 L71.5,359.35 L72.0,359.32 L72.5,359.29 L73.0,359.26 L73.5,359.23 L74.0,359.20 L74.5,359.17 L75.0,359.14 L75.5,359.11 L76.0,359.08 L76.5,359.05 L77.0,359.02 L77.5,358.99 L78.0,358.96 L78.5,358.93 L79.0,358.90 L79.5,358.87 L80.0,358.84 L80.5,358.81 L81.0,358.78 L81.5,358.75 L82.0,358.72 L82.5,358.69 L83.0,358.66 L83.5,358.63 L84.0,358.60 L84.5,358.57 L85.0,358.53 L85.5,358.50 L86.0,358.47 L86.5,358.44 L87.0,358.41 L87.5,358.38 L88.0,358.35 L88.5,358.32 L89.0,358.29 L89.5,358.26 L90.0,358.22 L90.5,358.19 L91.0,358.16 L91.5,358.13 L92.0,358.10 L92.5,358.07 L93.0,358.04 L93.5,358.00 L94.0,357.97 L94.5,357.94 L95.0,357.91 L95.5,357.88 L96.0,357.85 L96.5,357.81 L97.0,357.78 L97.5,357.75 L98.0,357.72 L98.5,357.69 L99.0,357.65 L99.5,357.62 L100.0,357.59 L100.5,357.56 L101.0,357.52 L101.5,357.49 L102.0,357.46 L102.5,357.43 L103.0,357.40 L103.5,357.36 L104.0,357.33 L104.5,357.30 L105.0,357.26 L105.5,357.23 L106.0,357.20 L106.5,357.17 L107.0,357.13 L107.5,357.10 L108.0,357.07 L108.5,357.03 L109.0,357.00 L109.5,356.97 L110.0,356.93 L110.5,356.90 L111.0,356.87 L111.5,356.83 L112.0,356.80 L112.5,356.77 L113.0,356.73 L113.5,356.70 L114.0,356.67 L114.5,356.63 L115.0,356.60 L115.5,356.57 L116.0,356.53 L116.5,356.50 L117.0,356.46 L117.5,356.43 L118.0,356.40 L118.5,356.36 L119.0,356.33 L119.5,356.29 L120.0,356.26 L120.5,356.22 L121.0,356.19 L121.5,356.16 L122.0,356.12 L122.5,356.09 L123.0,356.05 L123.5,356.02 L124.0,355.98 L124.5,355.95 L125.0,355.91 L125.5,355.88 L126.0,355.84 L126.5,355.81 L127.0,355.77 L127.5,355.74 L128.0,355.70 L128.5,355.67 L129.0,355.63 L129.5,355.60 L130.0,355.56 L130.5,355.53 L131.0,355.49 L131.5,355.45 L132.0,355.42 L132.5,355.38 L133.0,355.35 L133.5,355.31 L134.0,355.28 L134.5,355.24 L135.0,355.20 L135.5,355.17 L136.0,355.13 L136.5,355.10 L137.0,355.06 L137.5,355.02 L138.0,354.99 L138.5,354.95 L139.0,354.91 L139.5,354.88 L140.0,354.84 L140.5,354.80 L141.0,354.77 L141.5,354.73 L142.0,354.69 L142.5,354.66 L143.0,354.62 L143.5,354.58 L144.0,354.55 L144.5,354.51 L145.0,354.47 L145.5,354.43 L146.0,354.40 L146.5,354.36 L147.0,354.32 L147.5,354.28 L148.0,354.25 L148.5,354.21 L149.0,354.17 L149.5,354.13 L150.0,354.10 L150.5,354.06 L151.0,354.02 L151.5,353.98 L152.0,353.94 L152.5,353.91 L153.0,353.87 L153.5,353.83 L154.0,353.79 L154.5,353.75 L155.0,353.71 L155.5,353.68 L156.0,353.64 L156.5,353.60 L157.0,353.56 L157.5,353.52 L158.0,353.48 L158.5,353.44 L159.0,353.40 L159.5,353.37 L160.0,353.33 L160.5,353.29 L161.0,353.25 L161.5,353.21 L162.0,353.17 L162.5,353.13 L163.0,353.09 L163.5,353.05 L164.0,353.01 L164.5,352.97 L165.0,352.93 L165.5,352.89 L166.0,352.85 L166.5,352.81 L167.0,352.77 L167.5,352.73 L168.0,352.69 L168.5,352.65 L169.0,352.61 L169.5,352.57 L170.0,352.53 L170.5,352.49 L171.0,352.45 L171.5,352.41 L172.0,352.37 L172.5,352.33 L173.0,352.28 L173.5,352.24 L174.0,352.20 L174.5,352.16 L175.0,352.12 L175.5,352.08 L176.0,352.04 L176.5,352.00 L177.0,351.95 L177.5,351.91 L178.0,351.87 L178.5,351.83 L179.0,351.79 L179.5,351.75 L180.0,351.70 L180.5,351.66 L181.0,351.62 L181.5,351.58 L182.0,351.53 L182.5,351.49 L183.0,351.45 L183.5,351.41 L184.0,351.36 L184.5,351.32 L185.0,351.28 L185.5,351.24 L186.0,351.19 L186.5,351.15 L187.0,351.11 L187.5,351.06 L188.0,351.02 L188.5,350.98 L189.0,350.93 L189.5,350.89 L190.0,350.85 L190.5,350.80 L191.0,350.76 L191.5,350.72 L192.0,350.67 L192.5,350.63 L193.0,350.59 L193.5,350.54 L194.0,350.50 L194.5,350.45 L195.0,350.41 L195.5,350.36 L196.0,350.32 L196.5,350.28 L197.0,350.23 L197.5,350.19 L198.0,350.14 L198.5,350.10 L199.0,350.05 L199.5,350.01 L200.0,349.96 L200.5,349.92 L201.0,349.87 L201.5,349.83 L202.0,349.78 L202.5,349.73 L203.0,349.69 L203.5,349.64 L204.0,349.60 L204.5,349.55 L205.0,349.51 L205.5,349.46 L206.0,349.41 L206.5,349.37 L207.0,349.32 L207.5,349.27 L208.0,349.23 L208.5,349.18 L209.0,349.13 L209.5,349.09 L210.0,349.04 L210.5,348.99 L211.0,348.95 L211.5,348.90 L212.0,348.85 L212.5,348.81 L213.0,348.76 L213.5,348.71 L214.0,348.66 L214.5,348.62 L215.0,348.57 L215.5,348.52 L216.0,348.47 L216.5,348.42 L217.0,348.38 L217.5,348.33 L218.0,348.28 L218.5,348.23 L219.0,348.18 L219.5,348.13 L220.0,348.08 L220.5,348.04 L221.0,347.99 L221.5,347.94 L222.0,347.89 L222.5,347.84 L223.0,347.79 L223.5,347.74 L224.0,347.69 L224.5,347.64 L225.0,347.59 L225.5,347.54 L226.0,347.49 L226.5,347.44 L227.0,347.39 L227.5,347.34 L228.0,347.29 L228.5,347.24 L229.0,347.19 L229.5,347.14 L230.0,347.09 L230.5,347.04 L231.0,346.99 L231.5,346.94 L232.0,346.89 L232.5,346.84 L233.0,346.79 L233.5,346.73 L234.0,346.68 L234.5,346.63 L235.0,346.58 L235.5,346.53 L236.0,346.48 L236.5,346.42 L237.0,346.37 L237.5,346.32 L238.0,346.27 L238.5,346.22 L239.0,346.16 L239.5,346.11 L240.0,346.06 L240.5,346.01 L241.0,345.95 L241.5,345.90 L242.0,345.85 L242.5,345.79 L243.0,345.74 L243.5,345.69 L244.0,345.63 L244.5,345.58 L245.0,345.53 L245.5,345.47 L246.0,345.42 L246.5,345.36 L247.0,345.31 L247.5,345.26 L248.0,345.20 L248.5,345.15 L249.0,345.09 L249.5,345.04 L250.0,344.98 L250.5,344.93 L251.0,344.87 L251.5,344.82 L252.0,344.76 L252.5,344.71 L253.0,344.65 L253.5,344.60 L254.0,344.54 L254.5,344.48 L255.0,344.43 L255.5,344.37 L256.0,344.32 L256.5,344.26 L257.0,344.20 L257.5,344.15 L258.0,344.09 L258.5,344.03 L259.0,343.98 L259.5,343.92 L260.0,343.86 L260.5,343.81 L261.0,343.75 L261.5,343.69 L262.0,343.63 L262.5,343.58 L263.0,343.52 L263.5,343.46 L264.0,343.40 L264.5,343.34 L265.0,343.28 L265.5,343.23 L266.0,343.17 L266.5,343.11 L267.0,343.05 L267.5,342.99 L268.0,342.93 L268.5,342.87 L269.0,342.81 L269.5,342.75 L270.0,342.69 L270.5,342.63 L271.0,342.57 L271.5,342.51 L272.0,342.45 L272.5,342.39 L273.0,342.33 L273.5,342.27 L274.0,342.21 L274.5,342.15 L275.0,342.09 L275.5,342.03 L276.0,341.97 L276.5,341.91 L277.0,341.85 L277.5,341.79 L278.0,341.72 L278.5,341.66 L279.0,341.60 L279.5,341.54 L280.0,341.48 L280.5,341.41 L281.0,341.35 L281.5,341.29 L282.0,341.23 L282.5,341.16 L283.0,341.10 L283.5,341.04 L284.0,340.97 L284.5,340.91 L285.0,340.85 L285.5,340.78 L286.0,340.72 L286.5,340.65 L287.0,340.59 L287.5,340.53 L288.0,340.46 L288.5,340.40 L289.0,340.33 L289.5,340.27 L290.0,340.20 L290.5,340.14 L291.0,340.07 L291.5,340.01 L292.0,339.94 L292.5,339.87 L293.0,339.81 L293.5,339.74 L294.0,339.68 L294.5,339.61 L295.0,339.54 L295.5,339.48 L296.0,339.41 L296.5,339.34 L297.0,339.28 L297.5,339.21 L298.0,339.14 L298.5,339.07 L299.0,339.01 L299.5,338.94 L300.0,338.87 L300.5,338.80 L301.0,338.73 L301.5,338.66 L302.0,338.60 L302.5,338.53 L303.0,338.46 L303.5,338.39 L304.0,338.32 L304.5,338.25 L305.0,338.18 L305.5,338.11 L306.0,338.04 L306.5,337.97 L307.0,337.90 L307.5,337.83 L308.0,337.76 L308.5,337.69 L309.0,337.62 L309.5,337.55 L310.0,337.48 L310.5,337.40 L311.0,337.33 L311.5,337.26 L312.0,337.19 L312.5,337.12 L313.0,337.04 L313.5,336.97 L314.0,336.90 L314.5,336.83 L315.0,336.75 L315.5,336.68 L316.0,336.61 L316.5,336.53 L317.0,336.46 L317.5,336.39 L318.0,336.31 L318.5,336.24 L319.0,336.16 L319.5,336.09 L320.0,336.01 L320.5,335.94 L321.0,335.86 L321.5,335.79 L322.0,335.71 L322.5,335.64 L323.0,335.56 L323.5,335.49 L324.0,335.41 L324.5,335.33 L325.0,335.26 L325.5,335.18 L326.0,335.10 L326.5,335.03 L327.0,334.95 L327.5,334.87 L328.0,334.79 L328.5,334.72 L329.0,334.64 L329.5,334.56 L330.0,334.48 L330.5,334.40 L331.0,334.32 L331.5,334.25 L332.0,334.17 L332.5,334.09 L333.0,334.01 L333.5,333.93 L334.0,333.85 L334.5,333.77 L335.0,333.69 L335.5,333.61 L336.0,333.53 L336.5,333.44 L337.0,333.36 L337.5,333.28 L338.0,333.20 L338.5,333.12 L339.0,333.04 L339.5,332.95 L340.0,332.87 L340.5,332.79 L341.0,332.71 L341.5,332.62 L342.0,332.54 L342.5,332.46 L343.0,332.37 L343.5,332.29 L344.0,332.20 L344.5,332.12 L345.0,332.04 L345.5,331.95 L346.0,331.87 L346.5,331.78 L347.0,331.70 L347.5,331.61 L348.0,331.52 L348.5,331.44 L349.0,331.35 L349.5,331.27 L350.0,331.18 L350.5,331.09 L351.0,331.00 L351.5,330.92 L352.0,330.83 L352.5,330.74 L353.0,330.65 L353.5,330.57 L354.0,330.48 L354.5,330.39 L355.0,330.30 L355.5,330.21 L356.0,330.12 L356.5,330.03 L357.0,329.94 L357.5,329.85 L358.0,329.76 L358.5,329.67 L359.0,329.58 L359.5,329.49 L360.0,329.40 L360.5,329.31 L361.0,329.21 L361.5,329.12 L362.0,329.03 L362.5,328.94 L363.0,328.84 L363.5,328.75 L364.0,328.66 L364.5,328.56 L365.0,328.47 L365.5,328.38 L366.0,328.28 L366.5,328.19 L367.0,328.09 L367.5,328.00 L368.0,327.90 L368.5,327.81 L369.0,327.71 L369.5,327.61 L370.0,327.52 L370.5,327.42 L371.0,327.32 L371.5,327.23 L372.0,327.13 L372.5,327.03 L373.0,326.93 L373.5,326.84 L374.0,326.74 L374.5,326.64 L375.0,326.54 L375.5,326.44 L376.0,326.34 L376.5,326.24 L377.0,326.14 L377.5,326.04 L378.0,325.94 L378.5,325.84 L379.0,325.74 L379.5,325.64 L380.0,325.53 L380.5,325.43 L381.0,325.33 L381.5,325.23 L382.0,325.12 L382.5,325.02 L383.0,324.92 L383.5,324.81 L384.0,324.71 L384.5,324.61 L385.0,324.50 L385.5,324.40 L386.0,324.29 L386.5,324.19 L387.0,324.08 L387.5,323.97 L388.0,323.87 L388.5,323.76 L389.0,323.65 L389.5,323.55 L390.0,323.44 L390.5,323.33 L391.0,323.22 L391.5,323.11 L392.0,323.00 L392.5,322.90 L393.0,322.79 L393.5,322.68 L394.0,322.57 L394.5,322.46 L395.0,322.35 L395.5,322.23 L396.0,322.12 L396.5,322.01 L397.0,321.90 L397.5,321.79 L398.0,321.67 L398.5,321.56 L399.0,321.45 L399.5,321.33 L400.0,321.22 L400.5,321.11 L401.0,320.99 L401.5,320.88 L402.0,320.76 L402.5,320.64 L403.0,320.53 L403.5,320.41 L404.0,320.30 L404.5,320.18 L405.0,320.06 L405.5,319.94 L406.0,319.83 L406.5,319.71 L407.0,319.59 L407.5,319.47 L408.0,319.35 L408.5,319.23 L409.0,319.11 L409.5,318.99 L410.0,318.87 L410.5,318.75 L411.0,318.62 L411.5,318.50 L412.0,318.38 L412.5,318.26 L413.0,318.13 L413.5,318.01 L414.0,317.89 L414.5,317.76 L415.0,317.64 L415.5,317.51 L416.0,317.39 L416.5,317.26 L417.0,317.14 L417.5,317.01 L418.0,316.88 L418.5,316.75 L419.0,316.63 L419.5,316.50 L420.0,316.37 L420.5,316.24 L421.0,316.11 L421.5,315.98 L422.0,315.85 L422.5,315.72 L423.0,315.59 L423.5,315.46 L424.0,315.33 L424.5,315.20 L425.0,315.06 L425.5,314.93 L426.0,314.80 L426.5,314.66 L427.0,314.53 L427.5,314.39 L428.0,314.26 L428.5,314.12 L429.0,313.99 L429.5,313.85 L430.0,313.71 L430.5,313.58 L431.0,313.44 L431.5,313.30 L432.0,313.16 L432.5,313.02 L433.0,312.88 L433.5,312.75 L434.0,312.60 L434.5,312.46 L435.0,312.32 L435.5,312.18 L436.0,312.04 L436.5,311.90 L437.0,311.75 L437.5,311.61 L438.0,311.47 L438.5,311.32 L439.0,311.18 L439.5,311.03 L440.0,310.89 L440.5,310.74 L441.0,310.59 L441.5,310.45 L442.0,310.30 L442.5,310.15 L443.0,310.00 L443.5,309.85 L444.0,309.70 L444.5,309.55 L445.0,309.40 L445.5,309.25 L446.0,309.10 L446.5,308.95 L447.0,308.80 L447.5,308.64 L448.0,308.49 L448.5,308.33 L449.0,308.18 L449.5,308.02 L450.0,307.87 L450.5,307.71 L451.0,307.56 L451.5,307.40 L452.0,307.24 L452.5,307.08 L453.0,306.92 L453.5,306.77 L454.0,306.61 L454.5,306.45 L455.0,306.28 L455.5,306.12 L456.0,305.96 L456.5,305.80 L457.0,305.64 L457.5,305.47 L458.0,305.31 L458.5,305.14 L459.0,304.98 L459.5,304.81 L460.0,304.65 L460.5,304.48 L461.0,304.31 L461.5,304.14 L462.0,303.97 L462.5,303.80 L463.0,303.63 L463.5,303.46 L464.0,303.29 L464.5,303.12 L465.0,302.95 L465.5,302.78 L466.0,302.60 L466.5,302.43 L467.0,302.25 L467.5,302.08 L468.0,301.90 L468.5,301.73 L469.0,301.55 L469.5,301.37 L470.0,301.19 L470.5,301.02 L471.0,300.84 L471.5,300.66 L472.0,300.48 L472.5,300.29 L473.0,300.11 L473.5,299.93 L474.0,299.75 L474.5,299.56 L475.0,299.38 L475.5,299.19 L476.0,299.01 L476.5,298.82 L477.0,298.63 L477.5,298.45 L478.0,298.26 L478.5,298.07 L479.0,297.88 L479.5,297.69 L480.0,297.50 L480.5,297.30 L481.0,297.11 L481.5,296.92 L482.0,296.72 L482.5,296.53 L483.0,296.33 L483.5,296.14 L484.0,295.94 L484.5,295.74 L485.0,295.55 L485.5,295.35 L486.0,295.15 L486.5,294.95 L487.0,294.75 L487.5,294.54 L488.0,294.34 L488.5,294.14 L489.0,293.93 L489.5,293.73 L490.0,293.52 L490.5,293.32 L491.0,293.11 L491.5,292.90 L492.0,292.69 L492.5,292.49 L493.0,292.28 L493.5,292.06 L494.0,291.85 L494.5,291.64 L495.0,291.43 L495.5,291.21 L496.0,291.00 L496.5,290.78 L497.0,290.57 L497.5,290.35 L498.0,290.13 L498.5,289.91 L499.0,289.69 L499.5,289.47 L500.0,289.25 L500.5,289.03 L501.0,288.81 L501.5,288.58 L502.0,288.36 L502.5,288.14 L503.0,287.91 L503.5,287.68 L504.0,287.45 L504.5,287.23 L505.0,287.00 L505.5,286.77 L506.0,286.53 L506.5,286.30 L507.0,286.07 L507.5,285.84 L508.0,285.60 L508.5,285.37 L509.0,285.13 L509.5,284.89 L510.0,284.65 L510.5,284.41 L511.0,284.17 L511.5,283.93 L512.0,283.69 L512.5,283.45 L513.0,283.21 L513.5,282.96 L514.0,282.72 L514.5,282.47 L515.0,282.22 L515.5,281.97 L516.0,281.72 L516.5,281.47 L517.0,281.22 L517.5,280.97 L518.0,280.72 L518.5,280.46 L519.0,280.21 L519.5,279.95 L520.0,279.70 L520.5,279.44 L521.0,279.18 L521.5,278.92 L522.0,278.66 L522.5,278.40 L523.0,278.13 L523.5,277.87 L524.0,277.60 L524.5,277.34 L525.0,277.07 L525.5,276.80 L526.0,276.53 L526.5,276.26 L527.0,275.99 L527.5,275.72 L528.0,275.45 L528.5,275.17 L529.0,274.90 L529.5,274.62 L530.0,274.34 L530.5,274.07 L531.0,273.79 L531.5,273.51 L532.0,273.22 L532.5,272.94 L533.0,272.66 L533.5,272.37 L534.0,272.09 L534.5,271.80 L535.0,271.51 L535.5,271.22 L536.0,270.93 L536.5,270.64 L537.0,270.35 L537.5,270.05 L538.0,269.76 L538.5,269.46 L539.0,269.16 L539.5,268.87 L540.0,268.57 L540.5,268.27 L541.0,267.96 L541.5,267.66 L542.0,267.36 L542.5,267.05 L543.0,266.75 L543.5,266.44 L544.0,266.13 L544.5,265.82 L545.0,265.51 L545.5,265.20 L546.0,264.88 L546.5,264.57 L547.0,264.25 L547.5,263.93 L548.0,263.62 L548.5,263.30 L549.0,262.97 L549.5,262.65 L550.0,262.33 L550.5,262.00 L551.0,261.68 L551.5,261.35 L552.0,261.02 L552.5,260.69 L553.0,260.36 L553.5,260.03 L554.0,259.70 L554.5,259.36 L555.0,259.03 L555.5,258.69 L556.0,258.35 L556.5,258.01 L557.0,257.67 L557.5,257.33 L558.0,256.99 L558.5,256.64 L559.0,256.30 L559.5,255.95 L560.0,255.60 L560.5,255.25 L561.0,254.90 L561.5,254.55 L562.0,254.20 L562.5,253.84 L563.0,253.48 L563.5,253.13 L564.0,252.77 L564.5,252.41 L565.0,252.05 L565.5,251.68 L566.0,251.32 L566.5,250.95 L567.0,250.59 L567.5,250.22 L568.0,249.85 L568.5,249.48 L569.0,249.11 L569.5,248.73 L570.0,248.36 L570.5,247.98 L571.0,247.61 L571.5,247.23 L572.0,246.85 L572.5,246.47 L573.0,246.08 L573.5,245.70 L574.0,245.32 L574.5,244.93 L575.0,244.54 L575.5,244.15 L576.0,243.76 L576.5,243.37 L577.0,242.98 L577.5,242.58 L578.0,242.19 L578.5,241.79 L579.0,241.39 L579.5,240.99 L580.0,240.59 L580.5,240.19 L581.0,239.78 L581.5,239.38 L582.0,238.97 L582.5,238.57 L583.0,238.16 L583.5,237.75 L584.0,237.34 L584.5,236.92 L585.0,236.51 L585.5,236.09 L586.0,235.68 L586.5,235.26 L587.0,234.84 L587.5,234.42 L588.0,234.00 L588.5,233.58 L589.0,233.15 L589.5,232.73 L590.0,232.30 L590.5,231.88 L591.0,231.45 L591.5,231.02 L592.0,230.59 L592.5,230.15 L593.0,229.72 L593.5,229.29 L594.0,228.85 L594.5,228.41 L595.0,227.98 L595.5,227.54 L596.0,227.10 L596.5,226.66 L597.0,226.21 L597.5,225.77 L598.0,225.33 L598.5,224.88 L599.0,224.43 L599.5,223.99 L600.0,223.54 L600.5,223.09 L601.0,222.64 L601.5,222.19 L602.0,221.73 L602.5,221.28 L603.0,220.83 L603.5,220.37 L604.0,219.91 L604.5,219.46 L605.0,219.00 L605.5,218.54 L606.0,218.08 L606.5,217.62 L607.0,217.16 L607.5,216.70 L608.0,216.24 L608.5,215.77 L609.0,215.31 L609.5,214.85 L610.0,214.38 L610.5,213.91 L611.0,213.45 L611.5,212.98 L612.0,212.51 L612.5,212.05 L613.0,211.58 L613.5,211.11 L614.0,210.64 L614.5,210.17 L615.0,209.70 L615.5,209.23 L616.0,208.76 L616.5,208.29 L617.0,207.82 L617.5,207.34 L618.0,206.87 L618.5,206.40 L619.0,205.93 L619.5,205.46 L620.0,204.98 L620.5,204.51 L621.0,204.04 L621.5,203.57 L622.0,203.10 L622.5,202.62 L623.0,202.15 L623.5,201.68 L624.0,201.21 L624.5,200.74 L625.0,200.27 L625.5,199.80 L626.0,199.33 L626.5,198.86 L627.0,198.39 L627.5,197.92 L628.0,197.45 L628.5,196.98 L629.0,196.52 L629.5,196.05 L630.0,195.59 L630.5,195.12 L631.0,194.66 L631.5,194.20 L632.0,193.73 L632.5,193.27 L633.0,192.81 L633.5,192.36 L634.0,191.90 L634.5,191.44 L635.0,190.99 L635.5,190.54 L636.0,190.08 L636.5,189.63 L637.0,189.18 L637.5,188.74 L638.0,188.29 L638.5,187.85 L639.0,187.40 L639.5,186.96 L640.0,186.52 L640.5,186.09 L641.0,185.65 L641.5,185.22 L642.0,184.79 L642.5,184.36 L643.0,183.93 L643.5,183.51 L644.0,183.09 L644.5,182.67 L645.0,182.25 L645.5,181.84 L646.0,181.43 L646.5,181.02 L647.0,180.61 L647.5,180.21 L648.0,179.81 L648.5,179.41 L649.0,179.01 L649.5,178.62 L650.0,178.23 L650.5,177.85 L651.0,177.47 L651.5,177.09 L652.0,176.71 L652.5,176.34 L653.0,175.97 L653.5,175.61 L654.0,175.25 L654.5,174.89 L655.0,174.54 L655.5,174.19 L656.0,173.84 L656.5,173.50 L657.0,173.16 L657.5,172.83 L658.0,172.50 L658.5,172.17 L659.0,171.85 L659.5,171.54 L660.0,171.23 L660.5,170.92 L661.0,170.62 L661.5,170.32 L662.0,170.03 L662.5,169.74 L663.0,169.45 L663.5,169.18 L664.0,168.90 L664.5,168.63 L665.0,168.37 L665.5,168.11 L666.0,167.86 L666.5,167.61 L667.0,167.37 L667.5,167.13 L668.0,166.90 L668.5,166.68 L669.0,166.46 L669.5,166.24 L670.0,166.03 L670.5,165.83 L671.0,165.63 L671.5,165.44 L672.0,165.25 L672.5,165.07 L673.0,164.90 L673.5,164.73 L674.0,164.57 L674.5,164.41 L675.0,164.26 L675.5,164.12 L676.0,163.98 L676.5,163.85 L677.0,163.73 L677.5,163.61 L678.0,163.49 L678.5,163.39 L679.0,163.29 L679.5,163.19 L680.0,163.11 L680.5,163.03 L681.0,162.95 L681.5,162.89 L682.0,162.82 L682.5,162.77 L683.0,162.72 L683.5,162.68 L684.0,162.64 L684.5,162.62 L685.0,162.59 L685.5,162.58 L686.0,162.57 L686.5,162.57 L687.0,162.57 L687.5,162.58 L688.0,162.60 L688.5,162.62 L689.0,162.65 L689.5,162.69 L690.0,162.73 L690.5,162.78 L691.0,162.84 L691.5,162.90 L692.0,162.97 L692.5,163.05 L693.0,163.13 L693.5,163.22 L694.0,163.32 L694.5,163.42 L695.0,163.53 L695.5,163.64 L696.0,163.76 L696.5,163.89 L697.0,164.02 L697.5,164.16 L698.0,164.31 L698.5,164.46 L699.0,164.61 L699.5,164.78 L700.0,164.95 L700.5,165.12 L701.0,165.31 L701.5,165.49 L702.0,165.69 L702.5,165.89 L703.0,166.09 L703.5,166.30 L704.0,166.52 L704.5,166.74 L705.0,166.97 L705.5,167.20 L706.0,167.44 L706.5,167.68 L707.0,167.93 L707.5,168.19 L708.0,168.44 L708.5,168.71 L709.0,168.98 L709.5,169.25 L710.0,169.53 L710.5,169.82 L711.0,170.11 L711.5,170.40 L712.0,170.70 L712.5,171.01 L713.0,171.31 L713.5,171.63 L714.0,171.94 L714.5,172.27 L715.0,172.59 L715.5,172.92 L716.0,173.26 L716.5,173.59 L717.0,173.94 L717.5,174.28 L718.0,174.63 L718.5,174.99 L719.0,175.35 L719.5,175.71 L720.0,176.08 L720.5,176.44 L721.0,176.82 L721.5,177.19 L722.0,177.57 L722.5,177.96 L723.0,178.34 L723.5,178.73 L724.0,179.12 L724.5,179.52 L725.0,179.92 L725.5,180.32 L726.0,180.72 L726.5,181.13 L727.0,181.54 L727.5,181.95 L728.0,182.37 L728.5,182.79 L729.0,183.21 L729.5,183.63 L730.0,184.05 L730.5,184.48 L731.0,184.91 L731.5,185.34 L732.0,185.77 L732.5,186.21 L733.0,186.65 L733.5,187.09 L734.0,187.53 L734.5,187.97 L735.0,188.42 L735.5,188.86 L736.0,189.31 L736.5,189.76 L737.0,190.21 L737.5,190.66 L738.0,191.12 L738.5,191.57 L739.0,192.03 L739.5,192.49 L740.0,192.94 L740.5,193.40 L741.0,193.86 L741.5,194.33 L742.0,194.79 L742.5,195.25 L743.0,195.72 L743.5,196.18 L744.0,196.65 L744.5,197.12 L745.0,197.58 L745.5,198.05 L746.0,198.52 L746.5,198.99 L747.0,199.46 L747.5,199.93 L748.0,200.40 L748.5,200.87 L749.0,201.34 L749.5,201.81 L750.0,202.28 L750.5,202.76 L751.0,203.23 L751.5,203.70 L752.0,204.17 L752.5,204.64 L753.0,205.12 L753.5,205.59 L754.0,206.06 L754.5,206.53 L755.0,207.01 L755.5,207.48 L756.0,207.95 L756.5,208.42 L757.0,208.89 L757.5,209.36 L758.0,209.83 L758.5,210.30 L759.0,210.77 L759.5,211.24 L760.0,211.71 L760.5,212.18 L761.0,212.65 L761.5,213.11 L762.0,213.58 L762.5,214.05 L763.0,214.51 L763.5,214.98 L764.0,215.44 L764.5,215.90 L765.0,216.37 L765.5,216.83 L766.0,217.29 L766.5,217.75 L767.0,218.21 L767.5,218.67 L768.0,219.13 L768.5,219.59 L769.0,220.04 L769.5,220.50 L770.0,220.95 L770.5,221.41 L771.0,221.86 L771.5,222.31 L772.0,222.76 L772.5,223.21 L773.0,223.66 L773.5,224.11 L774.0,224.56 L774.5,225.00 L775.0,225.45 L775.5,225.89 L776.0,226.34 L776.5,226.78 L777.0,227.22 L777.5,227.66 L778.0,228.10 L778.5,228.54 L779.0,228.97 L779.5,229.41 L780.0,229.84 L780.5,230.28 L781.0,230.71 L781.5,231.14 L782.0,231.57 L782.5,232.00 L783.0,232.42 L783.5,232.85 L784.0,233.27 L784.5,233.70 L785.0,234.12 L785.5,234.54 L786.0,234.96 L786.5,235.38 L787.0,235.80 L787.5,236.21 L788.0,236.63 L788.5,237.04 L789.0,237.45 L789.5,237.86 L790.0,238.27 L790.5,238.68 L791.0,239.09 L791.5,239.49 L792.0,239.90 L792.5,240.30 L793.0,240.70 L793.5,241.10 L794.0,241.50 L794.5,241.90 L795.0,242.30 L795.5,242.69 L796.0,243.09 L796.5,243.48 L797.0,243.87 L797.5,244.26 L798.0,244.65 L798.5,245.04 L799.0,245.42 L799.5,245.81 L800.0,246.19 L800.5,246.57 L801.0,246.95 L801.5,247.33 L802.0,247.71 L802.5,248.09 L803.0,248.46 L803.5,248.84 L804.0,249.21 L804.5,249.58 L805.0,249.95 L805.5,250.32 L806.0,250.69 L806.5,251.06 L807.0,251.42 L807.5,251.78 L808.0,252.15 L808.5,252.51 L809.0,252.87 L809.5,253.23 L810.0,253.58 L810.5,253.94 L811.0,254.29 L811.5,254.65 L812.0,255.00 L812.5,255.35 L813.0,255.70 L813.5,256.05 L814.0,256.39 L814.5,256.74 L815.0,257.08 L815.5,257.43 L816.0,257.77 L816.5,258.11 L817.0,258.45 L817.5,258.79 L818.0,259.12 L818.5,259.46 L819.0,259.79 L819.5,260.12 L820.0,260.46 L820.5,260.79 L821.0,261.12 L821.5,261.44 L822.0,261.77 L822.5,262.09 L823.0,262.42 L823.5,262.74 L824.0,263.06 L824.5,263.38 L825.0,263.70 L825.5,264.02 L826.0,264.34 L826.5,264.65 L827.0,264.97 L827.5,265.28 L828.0,265.59 L828.5,265.90 L829.0,266.21 L829.5,266.52 L830.0,266.83 L830.5,267.14 L831.0,267.44 L831.5,267.74 L832.0,268.05 L832.5,268.35 L833.0,268.65 L833.5,268.95 L834.0,269.25 L834.5,269.54 L835.0,269.84 L835.5,270.13 L836.0,270.43 L836.5,270.72 L837.0,271.01 L837.5,271.30 L838.0,271.59 L838.5,271.88 L839.0,272.16 L839.5,272.45 L840.0,272.74 L840.5,273.02 L841.0,273.30 L841.5,273.58 L842.0,273.86 L842.5,274.14 L843.0,274.42 L843.5,274.70 L844.0,274.97 L844.5,275.25 L845.0,275.52 L845.5,275.80 L846.0,276.07 L846.5,276.34 L847.0,276.61 L847.5,276.88 L848.0,277.14 L848.5,277.41 L849.0,277.68 L849.5,277.94 L850.0,278.20 L850.5,278.47 L851.0,278.73 L851.5,278.99 L852.0,279.25 L852.5,279.51 L853.0,279.77 L853.5,280.02 L854.0,280.28 L854.5,280.53 L855.0,280.79 L855.5,281.04 L856.0,281.29 L856.5,281.54 L857.0,281.79 L857.5,282.04 L858.0,282.29 L858.5,282.54 L859.0,282.78 L859.5,283.03 L860.0,283.27 L860.5,283.52 L861.0,283.76 L861.5,284.00 L862.0,284.24 L862.5,284.48 L863.0,284.72 L863.5,284.96 L864.0,285.19 L864.5,285.43 L865.0,285.67 L865.5,285.90 L866.0,286.13 L866.5,286.37 L867.0,286.60 L867.5,286.83 L868.0,287.06 L868.5,287.29 L869.0,287.52 L869.5,287.74 L870.0,287.97 L870.5,288.20 L871.0,288.42 L871.5,288.65 L872.0,288.87 L872.5,289.09 L873.0,289.31 L873.5,289.53 L874.0,289.75 L874.5,289.97 L875.0,290.19 L875.5,290.41 L876.0,290.63 L876.5,290.84 L877.0,291.06 L877.5,291.27 L878.0,291.49 L878.5,291.70 L879.0,291.91 L879.5,292.12 L880.0,292.33 L880.5,292.54 L881.0,292.75 L881.5,292.96 L882.0,293.17 L882.5,293.37 L883.0,293.58 L883.5,293.78 L884.0,293.99 L884.5,294.19 L885.0,294.40 L885.5,294.60 L886.0,294.80 L886.5,295.00 L887.0,295.20 L887.5,295.40 L888.0,295.60 L888.5,295.80 L889.0,295.99 L889.5,296.19 L890.0,296.39 L890.5,296.58 L891.0,296.78 L891.5,296.97 L892.0,297.16 L892.5,297.36 L893.0,297.55 L893.5,297.74 L894.0,297.93 L894.5,298.12 L895.0,298.31 L895.5,298.50 L896.0,298.68 L896.5,298.87 L897.0,299.06 L897.5,299.24 L898.0,299.43 L898.5,299.61 L899.0,299.80 L899.5,299.98 L900.0,300.16 L900.5,300.34 L901.0,300.52 L901.5,300.70 L902.0,300.88 L902.5,301.06 L903.0,301.24 L903.5,301.42 L904.0,301.60 L904.5,301.77 L905.0,301.95 L905.5,302.13 L906.0,302.30 L906.5,302.48 L907.0,302.65 L907.5,302.82 L908.0,303.00 L908.5,303.17 L909.0,303.34 L909.5,303.51 L910.0,303.68 L910.5,303.85 L911.0,304.02 L911.5,304.19 L912.0,304.36 L912.5,304.52 L913.0,304.69 L913.5,304.86 L914.0,305.02 L914.5,305.19 L915.0,305.35 L915.5,305.52 L916.0,305.68 L916.5,305.84 L917.0,306.00 L917.5,306.17 L918.0,306.33 L918.5,306.49 L919.0,306.65 L919.5,306.81 L920.0,306.97 L920.5,307.13 L921.0,307.28 L921.5,307.44 L922.0,307.60 L922.5,307.75 L923.0,307.91 L923.5,308.07 L924.0,308.22 L924.5,308.38 L925.0,308.53 L925.5,308.68 L926.0,308.84 L926.5,308.99 L927.0,309.14 L927.5,309.29 L928.0,309.44 L928.5,309.59 L929.0,309.74 L929.5,309.89 L930.0,310.04 L930.5,310.19 L931.0,310.34 L931.5,310.48 L932.0,310.63 L932.5,310.78 L933.0,310.92 L933.5,311.07 L934.0,311.22 L934.5,311.36 L935.0,311.50 L935.5,311.65 L936.0,311.79 L936.5,311.93 L937.0,312.08 L937.5,312.22 L938.0,312.36 L938.5,312.50 L939.0,312.64 L939.5,312.78 L940.0,312.92 L940.5,313.06 L941.0,313.20 L941.5,313.34 L942.0,313.48 L942.5,313.61 L943.0,313.75 L943.5,313.89 L944.0,314.02 L944.5,314.16 L945.0,314.29 L945.5,314.43 L946.0,314.56 L946.5,314.70 L947.0,314.83 L947.5,314.96 L948.0,315.10 L948.5,315.23 L949.0,315.36 L949.5,315.49 L950.0,315.62 L950.5,315.76 L951.0,315.89 L951.5,316.02 L952.0,316.15 L952.5,316.27 L953.0,316.40 L953.5,316.53 L954.0,316.66 L954.5,316.79 L955.0,316.91 L955.5,317.04 L956.0,317.17 L956.5,317.29 L957.0,317.42 L957.5,317.54 L958.0,317.67 L958.5,317.79 L959.0,317.92 L959.5,318.04 L960.0,318.17 L960.5,318.29 L961.0,318.41 L961.5,318.53 L962.0,318.66 L962.5,318.78 L963.0,318.90 L963.5,319.02 L964.0,319.14 L964.5,319.26 L965.0,319.38 L965.5,319.50 L966.0,319.62 L966.5,319.74 L967.0,319.86 L967.5,319.97 L968.0,320.09 L968.5,320.21 L969.0,320.33 L969.5,320.44 L970.0,320.56 L970.5,320.67 L971.0,320.79 L971.5,320.90 L972.0,321.02 L972.5,321.13 L973.0,321.25 L973.5,321.36 L974.0,321.48 L974.5,321.59 L975.0,321.70 L975.5,321.82 L976.0,321.93 L976.5,322.04 L977.0,322.15 L977.5,322.26 L978.0,322.37 L978.5,322.48 L979.0,322.59 L979.5,322.70 L980.0,322.81 L980.5,322.92 L981.0,323.03 L981.5,323.14 L982.0,323.25 L982.5,323.36 L983.0,323.47 L983.5,323.57 L984.0,323.68 L984.5,323.79 L985.0,323.89 L985.5,324.00 L986.0,324.11 L986.5,324.21 L987.0,324.32 L987.5,324.42 L988.0,324.53 L988.5,324.63 L989.0,324.74 L989.5,324.84 L990.0,324.94 L990.5,325.05 L991.0,325.15 L991.5,325.25 L992.0,325.36 L992.5,325.46 L993.0,325.56 L993.5,325.66 L994.0,325.76 L994.5,325.86 L995.0,325.97 L995.5,326.07 L996.0,326.17 L996.5,326.27 L997.0,326.37 L997.5,326.47 L998.0,326.56 L998.5,326.66 L999.0,326.76 L999.5,326.86 L1000.0,326.96 L1000.5,327.06 L1001.0,327.15 L1001.5,327.25 L1002.0,327.35 L1002.5,327.45 L1003.0,327.54 L1003.5,327.64 L1004.0,327.73 L1004.5,327.83 L1005.0,327.93 L1005.5,328.02 L1006.0,328.12 L1006.5,328.21 L1007.0,328.30 L1007.5,328.40 L1008.0,328.49 L1008.5,328.59 L1009.0,328.68 L1009.5,328.77 L1010.0,328.87 L1010.5,328.96 L1011.0,329.05 L1011.5,329.14 L1012.0,329.24 L1012.5,329.33 L1013.0,329.42 L1013.5,329.51 L1014.0,329.60 L1014.5,329.69 L1015.0,329.78 L1015.5,329.87 L1016.0,329.96 L1016.5,330.05 L1017.0,330.14 L1017.5,330.23 L1018.0,330.32 L1018.5,330.41 L1019.0,330.50 L1019.5,330.59 L1020.0,330.68 L1020.5,330.76 L1021.0,330.85 L1021.5,330.94 L1022.0,331.03 L1022.5,331.11 L1023.0,331.20 L1023.5,331.29 L1024.0,331.37 L1024.5,331.46 L1025.0,331.55 L1025.5,331.63 L1026.0,331.72 L1026.5,331.80 L1027.0,331.89 L1027.5,331.97 L1028.0,332.06 L1028.5,332.14 L1029.0,332.23 L1029.5,332.31 L1030.0,332.39 L1030.5,332.48 L1031.0,332.56 L1031.5,332.64 L1032.0,332.73 L1032.5,332.81 L1033.0,332.89 L1033.5,332.97 L1034.0,333.06 L1034.5,333.14 L1035.0,333.22 L1035.5,333.30 L1036.0,333.38 L1036.5,333.46 L1037.0,333.54 L1037.5,333.63 L1038.0,333.71 L1038.5,333.79 L1039.0,333.87 L1039.5,333.95 L1040.0,334.03 L1040.5,334.11 L1041.0,334.18 L1041.5,334.26 L1042.0,334.34 L1042.5,334.42 L1043.0,334.50 L1043.5,334.58 L1044.0,334.66 L1044.5,334.73 L1045.0,334.81 L1045.5,334.89 L1046.0,334.97 L1046.5,335.04 L1047.0,335.12 L1047.5,335.20 L1048.0,335.28 L1048.5,335.35 L1049.0,335.43 L1049.5,335.50 L1050.0,335.58 L1050.5,335.66 L1051.0,335.73 L1051.5,335.81 L1052.0,335.88 L1052.5,335.96 L1053.0,336.03 L1053.5,336.11 L1054.0,336.18 L1054.5,336.26 L1055.0,336.33 L1055.5,336.40 L1056.0,336.48 L1056.5,336.55 L1057.0,336.62 L1057.5,336.70 L1058.0,336.77 L1058.5,336.84 L1059.0,336.92 L1059.5,336.99 L1060.0,337.06 L1060.5,337.13 L1061.0,337.21 L1061.5,337.28 L1062.0,337.35 L1062.5,337.42 L1063.0,337.49 L1063.5,337.56 L1064.0,337.63 L1064.5,337.71 L1065.0,337.78 L1065.5,337.85 L1066.0,337.92 L1066.5,337.99 L1067.0,338.06 L1067.5,338.13 L1068.0,338.20 L1068.5,338.27 L1069.0,338.34 L1069.5,338.40 L1070.0,338.47 L1070.5,338.54 L1071.0,338.61 L1071.5,338.68 L1072.0,338.75 L1072.5,338.82 L1073.0,338.89 L1073.5,338.95 L1074.0,339.02 L1074.5,339.09 L1075.0,339.16 L1075.5,339.22 L1076.0,339.29 L1076.5,339.36 L1077.0,339.42 L1077.5,339.49 L1078.0,339.56 L1078.5,339.62 L1079.0,339.69 L1079.5,339.76 L1080.0,339.82 L1080.5,339.89 L1081.0,339.95 L1081.5,340.02 L1082.0,340.09 L1082.5,340.15 L1083.0,340.22 L1083.5,340.28 L1084.0,340.35 L1084.5,340.41 L1085.0,340.48 L1085.5,340.54 L1086.0,340.60 L1086.5,340.67 L1087.0,340.73 L1087.5,340.80 L1088.0,340.86 L1088.5,340.92 L1089.0,340.99 L1089.5,341.05 L1090.0,341.11 L1090.5,341.18 L1091.0,341.24 L1091.5,341.30 L1092.0,341.36 L1092.5,341.43 L1093.0,341.49 L1093.5,341.55 L1094.0,341.61 L1094.5,341.68 L1095.0,341.74 L1095.5,341.80 L1096.0,341.86 L1096.5,341.92 L1097.0,341.98 L1097.5,342.04 L1098.0,342.11 L1098.5,342.17 L1099.0,342.23 L1099.5,342.29 L1100.0,342.35 L1100.5,342.41 L1101.0,342.47 L1101.5,342.53 L1102.0,342.59 L1102.5,342.65 L1103.0,342.71 L1103.5,342.77 L1104.0,342.83 L1104.5,342.89 L1105.0,342.95 L1105.5,343.00 L1106.0,343.06 L1106.5,343.12 L1107.0,343.18 L1107.5,343.24 L1108.0,343.30 L1108.5,343.36 L1109.0,343.41 L1109.5,343.47 L1110.0,343.53 L1110.5,343.59 L1111.0,343.65 L1111.5,343.70 L1112.0,343.76 L1112.5,343.82 L1113.0,343.88 L1113.5,343.93 L1114.0,343.99 L1114.5,344.05 L1115.0,344.10 L1115.5,344.16 L1116.0,344.22 L1116.5,344.27 L1117.0,344.33 L1117.5,344.38 L1118.0,344.44 L1118.5,344.50 L1119.0,344.55 L1119.5,344.61 L1120.0,344.66 L1120.5,344.72 L1121.0,344.77 L1121.5,344.83 L1122.0,344.88 L1122.5,344.94 L1123.0,344.99 L1123.5,345.05 L1124.0,345.10 L1124.5,345.16 L1125.0,345.21 L1125.5,345.27 L1126.0,345.32 L1126.5,345.38 L1127.0,345.43 L1127.5,345.48 L1128.0,345.54 L1128.5,345.59 L1129.0,345.64 L1129.5,345.70 L1130.0,345.75 L1130.5,345.80 L1131.0,345.86 L1131.5,345.91 L1132.0,345.96 L1132.5,346.02 L1133.0,346.07 L1133.5,346.12 L1134.0,346.17 L1134.5,346.23 L1135.0,346.28 L1135.5,346.33 L1136.0,346.38 L1136.5,346.44 L1137.0,346.49 L1137.5,346.54 L1138.0,346.59 L1138.5,346.64 L1139.0,346.69 L1139.5,346.75 L1140.0,346.80 L1140.5,346.85 L1141.0,346.90 L1141.5,346.95 L1142.0,347.00 L1142.5,347.05 L1143.0,347.10 L1143.5,347.15 L1144.0,347.20 L1144.5,347.25 L1145.0,347.30 L1145.5,347.35 L1146.0,347.40 L1146.5,347.45 L1147.0,347.50 L1147.5,347.55 L1148.0,347.60 L1148.5,347.65 L1149.0,347.70 L1149.5,347.75 L1150.0,347.80 L1150.5,347.85 L1151.0,347.90 L1151.5,347.95 L1152.0,348.00 L1152.5,348.05 L1153.0,348.09 L1153.5,348.14 L1154.0,348.19 L1154.5,348.24 L1155.0,348.29 L1155.5,348.34 L1156.0,348.39 L1156.5,348.43 L1157.0,348.48 L1157.5,348.53 L1158.0,348.58 L1158.5,348.62 L1159.0,348.67 L1159.5,348.72 L1160.0,348.77 L1160.5,348.81 L1161.0,348.86 L1161.5,348.91 L1162.0,348.96 L1162.5,349.00 L1163.0,349.05 L1163.5,349.10 L1164.0,349.14 L1164.5,349.19 L1165.0,349.24 L1165.5,349.28 L1166.0,349.33 L1166.5,349.38 L1167.0,349.42 L1167.5,349.47 L1168.0,349.51 L1168.5,349.56 L1169.0,349.61 L1169.5,349.65 L1170.0,349.70 L1170.5,349.74 L1171.0,349.79 L1171.5,349.83 L1172.0,349.88 L1172.5,349.92 L1173.0,349.97 L1173.5,350.01 L1174.0,350.06 L1174.5,350.10 L1175.0,350.15 L1175.5,350.19 L1176.0,350.24 L1176.5,350.28 L1177.0,350.33 L1177.5,350.37 L1178.0,350.42 L1178.5,350.46 L1179.0,350.51 L1179.5,350.55 L1180.0,350.59 L1180.5,350.64 L1181.0,350.68 L1181.5,350.73 L1182.0,350.77 L1182.5,350.81 L1183.0,350.86 L1183.5,350.90 L1184.0,350.94 L1184.5,350.99 L1185.0,351.03 L1185.5,351.07 L1186.0,351.12 L1186.5,351.16 L1187.0,351.20 L1187.5,351.24 L1188.0,351.29 L1188.5,351.33 L1189.0,351.37 L1189.5,351.42 L1190.0,351.46 L1190.5,351.50 L1191.0,351.54 L1191.5,351.58 L1192.0,351.63 L1192.5,351.67 L1193.0,351.71 L1193.5,351.75 L1194.0,351.80 L1194.5,351.84 L1195.0,351.88 L1195.5,351.92 L1196.0,351.96 L1196.5,352.00 L1197.0,352.04 L1197.5,352.09 L1198.0,352.13 L1198.5,352.17 L1199.0,352.21 L1199.5,352.25 L1200.0,352.29 L1200.5,352.33 L1201.0,352.37 L1201.5,352.41 L1202.0,352.45 L1202.5,352.50 L1203.0,352.54 L1203.5,352.58 L1204.0,352.62 L1204.5,352.66 L1205.0,352.70 L1205.5,352.74 L1206.0,352.78 L1206.5,352.82 L1207.0,352.86 L1207.5,352.90 L1208.0,352.94 L1208.5,352.98 L1209.0,353.02 L1209.5,353.06 L1210.0,353.10 L1210.5,353.14 L1211.0,353.18 L1211.5,353.22 L1212.0,353.25 L1212.5,353.29 L1213.0,353.33 L1213.5,353.37 L1214.0,353.41 L1214.5,353.45 L1215.0,353.49 L1215.5,353.53 L1216.0,353.57 L1216.5,353.61 L1217.0,353.64 L1217.5,353.68 L1218.0,353.72 L1218.5,353.76 L1219.0,353.80 L1219.5,353.84 L1220.0,353.87 L1220.5,353.91 L1221.0,353.95 L1221.5,353.99 L1222.0,354.03 L1222.5,354.06 L1223.0,354.10 L1223.5,354.14 L1224.0,354.18 L1224.5,354.22 L1225.0,354.25 L1225.5,354.29 L1226.0,354.33 L1226.5,354.37 L1227.0,354.40 L1227.5,354.44 L1228.0,354.48 L1228.5,354.52 L1229.0,354.55 L1229.5,354.59 L1230.0,354.63 L1230.5,354.66 L1231.0,354.70 L1231.5,354.74 L1232.0,354.77 L1232.5,354.81 L1233.0,354.85 L1233.5,354.88 L1234.0,354.92 L1234.5,354.96 L1235.0,354.99 L1235.5,355.03 L1236.0,355.07 L1236.5,355.10 L1237.0,355.14 L1237.5,355.17 L1238.0,355.21 L1238.5,355.25 L1239.0,355.28 L1239.5,355.32 L1240.0,355.35 L1240.5,355.39 L1241.0,355.43 L1241.5,355.46 L1242.0,355.50 L1242.5,355.53 L1243.0,355.57 L1243.5,355.60" stroke="#00ff00" stroke-width="1" fill="none" shape-rendering="crispEdges"/><text x="656" y="156" text-anchor="middle" font-family="Liberation Sans" font-size="17" fill="#00ff00">V(n004)</text></svg>
<div style="position:absolute;left:2px;top:410px;width:1276px;height:301px;background:#c0dcc0;"></div><div style="position:absolute;left:2px;top:410px;width:1275px;height:1px;background:#dcecdc;"></div><div style="position:absolute;left:2px;top:410px;width:1px;height:300px;background:#dcecdc;"></div><div style="position:absolute;left:3px;top:411px;width:1273px;height:1px;background:#fff;"></div><div style="position:absolute;left:3px;top:411px;width:1px;height:298px;background:#fff;"></div><div style="position:absolute;left:3px;top:709px;width:1274px;height:1px;background:#808080;"></div><div style="position:absolute;left:1276px;top:411px;width:1px;height:299px;background:#808080;"></div><div style="position:absolute;left:2px;top:710px;width:1276px;height:1px;background:#404040;"></div><div style="position:absolute;left:1277px;top:410px;width:1px;height:301px;background:#404040;"></div><div style="position:absolute;left:6px;top:414px;width:1268px;height:24px;background:linear-gradient(to right,#808080 0.0px,#808080 318.0px,#a0a0a4 318.0px,#a0a0a4 904.0px,#c0c0c0 904.0px,#c0c0c0 1268.0px);"></div><svg style="position:absolute;left:6px;top:415px" width="22" height="23" viewBox="0 0 22 23"><path d="M2 10.5H10" stroke="#000" stroke-width="1.1" fill="none"/><path d="M10.5 6.5V14.5" stroke="#202060" stroke-width="1.4" fill="none"/><path d="M11 6.5L13 5.5V4.5L18 0.5M11 14.5L13 16L14 18L17 21.5" stroke="#000" stroke-width="1.3" fill="none"/><path d="M14 18L17 22L13 20Z" fill="#000"/></svg><div class="t" style="left:31px;top:418px;font-size:15px;font-weight:bold;letter-spacing:0.3px;color:#c0dcc0;">Draft72</div><div style="position:absolute;left:1204px;top:416px;width:21px;height:20px;background:#c0dcc0;box-shadow:inset 1px 1px 0 #fff, inset -1px -1px 0 #404040, inset -2px -2px 0 #808080;"><div style="position:absolute;left:5px;top:14px;width:8px;height:2px;background:#000"></div></div><div style="position:absolute;left:1226px;top:416px;width:22px;height:20px;background:#c0dcc0;box-shadow:inset 1px 1px 0 #fff, inset -1px -1px 0 #404040, inset -2px -2px 0 #808080;"><div style="position:absolute;left:5px;top:5px;width:9px;height:8px;border:1px solid #000;border-top-width:2px;"></div></div><div style="position:absolute;left:1250px;top:416px;width:22px;height:20px;background:#c0dcc0;box-shadow:inset 1px 1px 0 #fff, inset -1px -1px 0 #404040, inset -2px -2px 0 #808080;"><svg style="position:absolute;left:0;top:0" width="22" height="20"><path d="M6.0 4.5L16.0 14.5M16.0 4.5L6.0 14.5" stroke="#000" stroke-width="2"/></svg></div><div style="position:absolute;left:6px;top:439px;width:1268px;height:268px;background:#c0c0c0;"></div><div style="position:absolute;left:6px;top:439px;width:1267px;height:1px;background:#808080;"></div><div style="position:absolute;left:6px;top:439px;width:1px;height:267px;background:#808080;"></div><div style="position:absolute;left:7px;top:440px;width:1265px;height:1px;background:#404040;"></div><div style="position:absolute;left:7px;top:440px;width:1px;height:265px;background:#404040;"></div><div style="position:absolute;left:7px;top:705px;width:1266px;height:1px;background:#dcecdc;"></div><div style="position:absolute;left:1272px;top:440px;width:1px;height:266px;background:#dcecdc;"></div><div style="position:absolute;left:6px;top:706px;width:1268px;height:1px;background:#fff;"></div><div style="position:absolute;left:1273px;top:439px;width:1px;height:268px;background:#fff;"></div><svg style="position:absolute;left:0;top:0" width="1280" height="738"><path d="M516.5 571V550.5H537 M571 550.5H615.5 M619.5 550.5H760.5V554 M650.5 474.5H734.5V488 M650.5 474.5V491 M650.5 533V550.5 M650.5 550.5V554 M650.5 593V600.5H760.5V588 M701.5 474.5V514 M701.5 518.5V617 M734.5 520V600.5 M516.5 604V609" stroke="#0000ff" stroke-width="1" fill="none" shape-rendering="crispEdges"/><path d="M615.5 541V559 M619.5 541V559 M692 514.5H710 M692 518.5H710" stroke="#000080" stroke-width="1.2" fill="none" shape-rendering="crispEdges"/><path d="M537 550.5L541.5 541.5L550 558.5L558.5 541.5L567 558.5L571 550.5 M760.5 554L768.5 558.5L751.5 567L768.5 575.5L751.5 584L760.5 588 M734.5 488L743.5 492L726.5 500L743.5 508.5L726.5 516.5L734.5 520" stroke="#000080" stroke-width="1.1" fill="none"/><path d="M650.5 491 C658.5 493 661.5 501 656.5 506 C651.5 507 644.5 508 645.5 506 C646.5 504 655.5 504 656.5 506 C661.5 510 661.5 515 656.5 519 C651.5 520 644.5 521 645.5 519 C646.5 517 655.5 517 656.5 519 C661.5 523 659.5 532 650.5 533 M650.5 551 C658.5 553 661.5 561 656.5 566 C651.5 567 644.5 568 645.5 566 C646.5 564 655.5 564 656.5 566 C661.5 570 661.5 575 656.5 579 C651.5 580 644.5 581 645.5 579 C646.5 577 655.5 577 656.5 579 C661.5 583 659.5 592 650.5 593" stroke="#000080" stroke-width="1.1" fill="none"/><circle cx="646" cy="527" r="2" stroke="#000080" fill="none"/><circle cx="646" cy="587" r="2" stroke="#000080" fill="none"/><circle cx="516.5" cy="587.5" r="16.5" stroke="#000080" stroke-width="1.1" fill="none"/><path d="M512 578H521 M516.5 573.5V582.5 M512 598H521" stroke="#000080" stroke-width="1.1" fill="none" shape-rendering="crispEdges"/><path d="M507 609.5H527L517 619Z M691 617.5H711L701 628Z" stroke="#0000ff" stroke-width="1.1" fill="none"/><rect x="699.0" y="472.0" width="5" height="5" fill="#0000ff"/><rect x="648.0" y="548.0" width="5" height="5" fill="#0000ff"/><rect x="699.0" y="598.0" width="5" height="5" fill="#0000ff"/><rect x="732.0" y="598.0" width="5" height="5" fill="#0000ff"/><text x="477" y="495" text-anchor="start" font-family="Liberation Sans" font-weight="bold" font-size="11" fill="#000">.ac dec 1000 1 10Meg</text><text x="477" y="512" text-anchor="start" font-family="Liberation Sans" font-weight="bold" font-size="11" fill="#000">K1&#160; L2 L3 1</text><text x="553" y="538" text-anchor="middle" font-family="Liberation Sans" font-weight="bold" font-size="11" fill="#000">R1</text><text x="553" y="569" text-anchor="middle" font-family="Liberation Sans" font-weight="bold" font-size="11" fill="#000">1K</text><text x="616" y="538" text-anchor="middle" font-family="Liberation Sans" font-weight="bold" font-size="11" fill="#000">C2</text><text x="616" y="569" text-anchor="middle" font-family="Liberation Sans" font-weight="bold" font-size="11" fill="#000">100n</text><text x="661" y="508" text-anchor="start" font-family="Liberation Sans" font-weight="bold" font-size="11" fill="#000">L3</text><text x="661" y="529" text-anchor="start" font-family="Liberation Sans" font-weight="bold" font-size="11" fill="#000">50µH</text><text x="661" y="567" text-anchor="start" font-family="Liberation Sans" font-weight="bold" font-size="11" fill="#000">L2</text><text x="661" y="588" text-anchor="start" font-family="Liberation Sans" font-weight="bold" font-size="11" fill="#000">50µH</text><text x="705" y="508" text-anchor="start" font-family="Liberation Sans" font-weight="bold" font-size="11" fill="#000">C1</text><text x="705" y="537" text-anchor="start" font-family="Liberation Sans" font-weight="bold" font-size="11" fill="#000">3.1nF</text><text x="745" y="499" text-anchor="start" font-family="Liberation Sans" font-weight="bold" font-size="11" fill="#000">R3</text><text x="745" y="518" text-anchor="start" font-family="Liberation Sans" font-weight="bold" font-size="11" fill="#000">1.8K</text><text x="769" y="566" text-anchor="start" font-family="Liberation Sans" font-weight="bold" font-size="11" fill="#000">R2</text><text x="769" y="585" text-anchor="start" font-family="Liberation Sans" font-weight="bold" font-size="11" fill="#000">1K6</text><text x="479" y="592" text-anchor="start" font-family="Liberation Sans" font-weight="bold" font-size="11" fill="#000">V1</text><text x="497" y="634" text-anchor="start" font-family="Liberation Sans" font-weight="bold" font-size="11" fill="#000">AC 1 0</text><text x="497" y="648" text-anchor="start" font-family="Liberation Sans" font-weight="bold" font-size="11" fill="#000">Rser=0 Cpar=0</text><text x="467" y="652" text-anchor="start" font-family="Liberation Sans" font-weight="bold" font-size="11" fill="#000">SINE(0 1 200kHz)</text></svg>
<div class="t" style="left:1.2px;top:718px;font-size:14px;letter-spacing:0px;color:#000;">x</div>
<div class="t" style="left:14.5px;top:718px;font-size:14px;letter-spacing:0px;color:#000;">=</div>
<div class="t" style="left:28px;top:718px;font-size:14px;letter-spacing:-0.2px;color:#000;">215.535KHz</div>
<div class="t" style="left:118.5px;top:718px;font-size:14px;letter-spacing:0px;color:#000;">y</div>
<div class="t" style="left:131.5px;top:718px;font-size:14px;letter-spacing:0px;color:#000;">=</div>
<div class="t" style="left:144.8px;top:718px;font-size:14px;letter-spacing:0px;color:#000;">37.143mV</div>
<div style="position:absolute;left:1220px;top:715px;width:59px;height:1px;background:#808080;"></div>
<div style="position:absolute;left:1220px;top:715px;width:1px;height:18px;background:#808080;"></div>
<div style="position:absolute;left:1220px;top:733px;width:60px;height:1px;background:#fff;"></div>
<div style="position:absolute;left:1279px;top:715px;width:1px;height:19px;background:#fff;"></div>
<div style="position:absolute;left:0px;top:735px;width:1280px;height:1px;background:#fff;"></div>
</body></html>
